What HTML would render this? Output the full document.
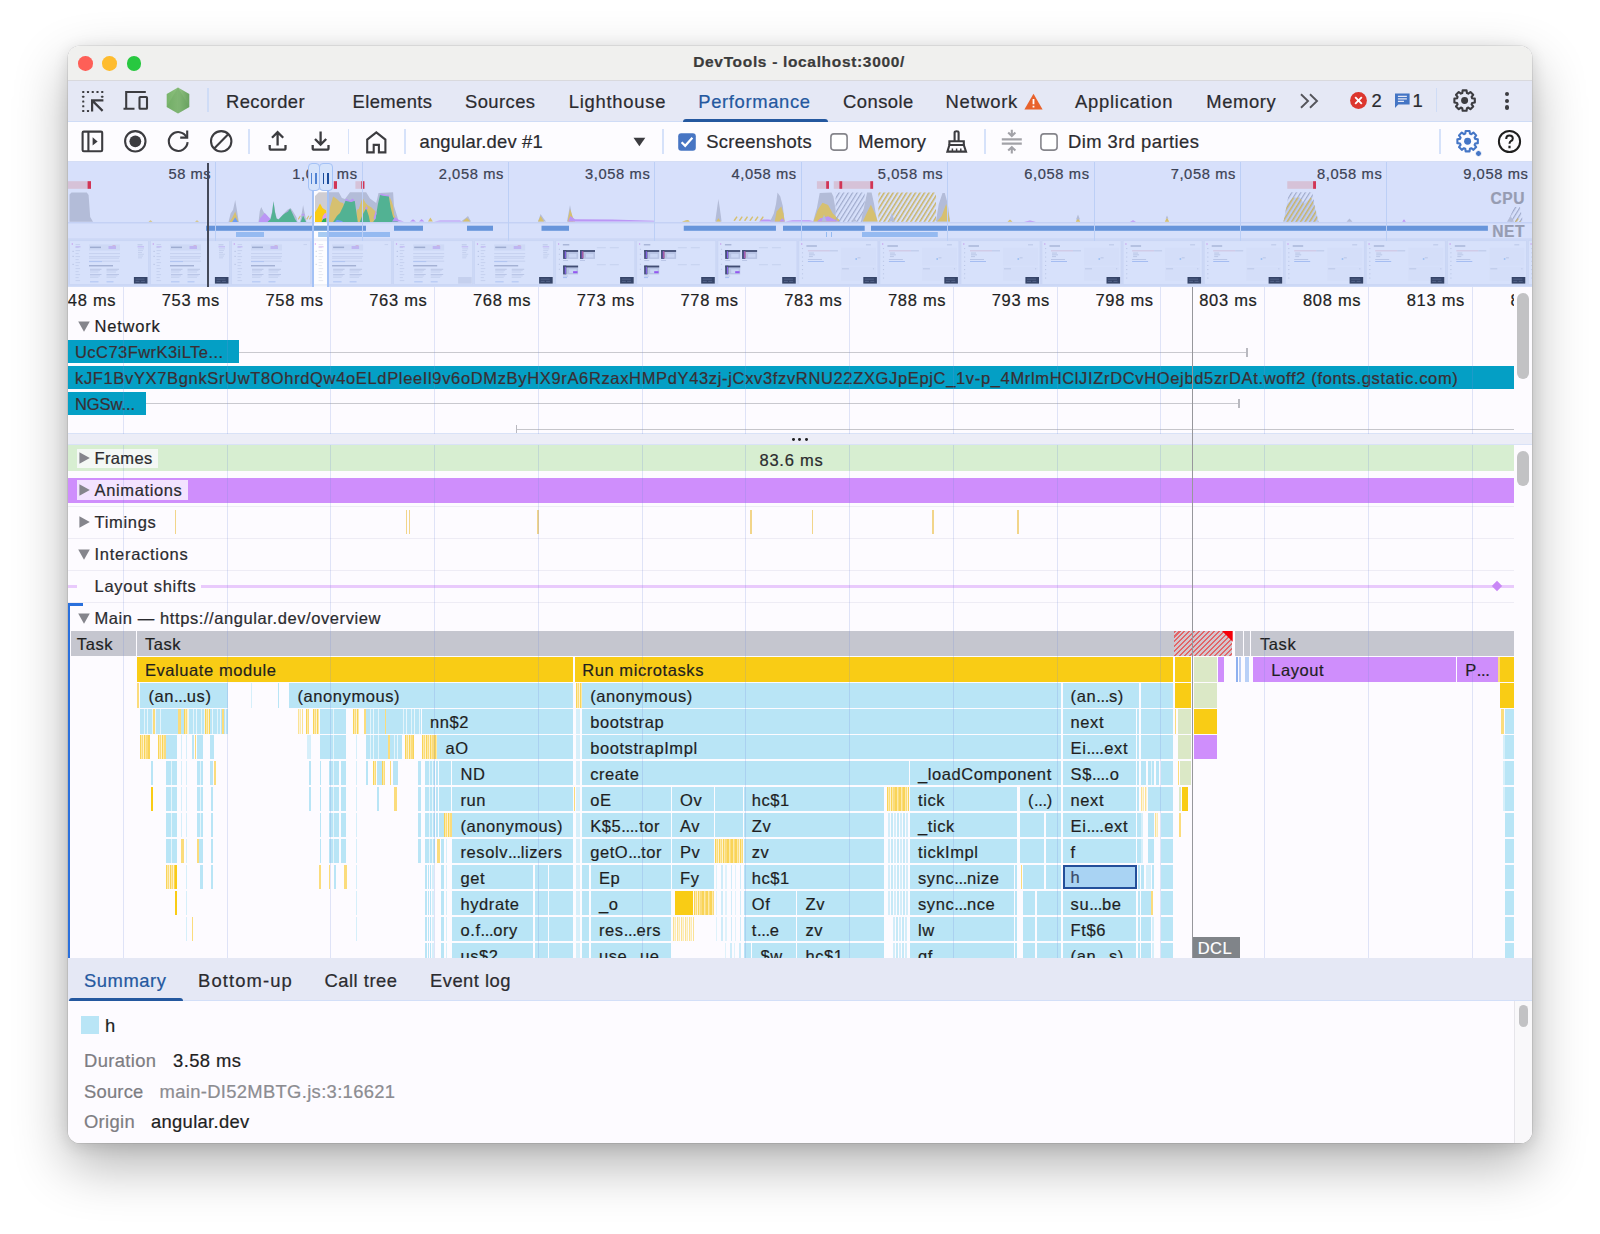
<!DOCTYPE html><html lang="en"><head><meta charset="utf-8"><title>DevTools - localhost:3000/</title><style>
html,body{margin:0;padding:0;background:#fff;}
body{width:1600px;height:1234px;position:relative;overflow:hidden;font-family:"Liberation Sans",sans-serif;}
#win{position:absolute;left:68px;top:46px;width:1464px;height:1097px;border-radius:12px;overflow:hidden;background:#fdfbff;}
#shadow{position:absolute;left:68px;top:46px;width:1464px;height:1097px;border-radius:12px;
 box-shadow:0 0 0 0.6px rgba(0,0,0,.13),0 22px 54px 0 rgba(0,0,0,.30),0 3px 16px 0 rgba(0,0,0,.12);}
#pg{position:absolute;left:-68px;top:-46px;width:1600px;height:1234px;}
#pg div{position:absolute;box-sizing:border-box;}
#pg svg{position:absolute;overflow:visible;}
.t{white-space:nowrap;line-height:30px;height:30px;-webkit-text-stroke:0.22px currentColor;}
.f{-webkit-text-stroke:0.2px currentColor;white-space:nowrap;line-height:26px;font-size:16.6px;color:#1f1f1f;overflow:hidden;padding-left:7.5px;}
</style></head><body>
<div id="shadow"></div><div id="win"><div id="pg">
<div style="left:68.00px;top:46.00px;width:1464.00px;height:34.50px;background:#f0f0ee;border-bottom:1px solid #d9d9dd;"></div>
<div style="left:78.10px;top:56.10px;width:14.60px;height:14.60px;background:#fe5f57;border-radius:50%;"></div>
<div style="left:102.40px;top:56.10px;width:14.60px;height:14.60px;background:#febc2e;border-radius:50%;"></div>
<div style="left:126.70px;top:56.10px;width:14.60px;height:14.60px;background:#28c840;border-radius:50%;"></div>
<div class="t" style="left:693.20px;top:47.40px;font-size:15.5px;color:#3b3b3b;letter-spacing:0.670px;font-weight:bold;">DevTools - localhost:3000/</div>
<div style="left:68.00px;top:80.50px;width:1464.00px;height:41.50px;background:#e5e8f5;border-bottom:1px solid #cfdcf6;"></div>
<div class="t" style="left:226.00px;top:86.90px;font-size:18.4px;color:#2b2b2f;letter-spacing:0.415px;">Recorder</div>
<div class="t" style="left:352.50px;top:86.90px;font-size:18.4px;color:#2b2b2f;letter-spacing:0.412px;">Elements</div>
<div class="t" style="left:465.00px;top:86.90px;font-size:18.4px;color:#2b2b2f;letter-spacing:0.428px;">Sources</div>
<div class="t" style="left:568.75px;top:86.90px;font-size:18.4px;color:#2b2b2f;letter-spacing:0.747px;">Lighthouse</div>
<div class="t" style="left:698.25px;top:86.90px;font-size:18.4px;color:#24589f;letter-spacing:0.651px;">Performance</div>
<div class="t" style="left:843.00px;top:86.90px;font-size:18.4px;color:#2b2b2f;letter-spacing:0.463px;">Console</div>
<div class="t" style="left:945.50px;top:86.90px;font-size:18.4px;color:#2b2b2f;letter-spacing:0.717px;">Network</div>
<div class="t" style="left:1075.00px;top:86.90px;font-size:18.4px;color:#2b2b2f;letter-spacing:0.748px;">Application</div>
<div class="t" style="left:1206.25px;top:86.90px;font-size:18.4px;color:#2b2b2f;letter-spacing:0.591px;">Memory</div>
<div style="left:682.50px;top:118.60px;width:145.50px;height:3.40px;background:#24589f;border-radius:4px 4px 0 0;"></div>
<div style="left:207.30px;top:88.00px;width:1.30px;height:24.00px;background:#cfdcf6;"></div>
<div style="left:1436.00px;top:88.00px;width:1.30px;height:24.00px;background:#cfdcf6;"></div>
<svg style="left:0;top:0" width="1" height="1"><g fill="#3c3c40"><rect x="82.20" y="91" width="2.1" height="2.1" rx=".4"/><rect x="86.95" y="91" width="2.1" height="2.1" rx=".4"/><rect x="82.2" y="95.75" width="2.1" height="2.1" rx=".4"/><rect x="91.70" y="91" width="2.1" height="2.1" rx=".4"/><rect x="82.2" y="100.50" width="2.1" height="2.1" rx=".4"/><rect x="96.45" y="91" width="2.1" height="2.1" rx=".4"/><rect x="82.2" y="105.25" width="2.1" height="2.1" rx=".4"/><rect x="101.20" y="91" width="2.1" height="2.1" rx=".4"/><rect x="82.2" y="110.00" width="2.1" height="2.1" rx=".4"/><rect x="86.95" y="110" width="2.1" height="2.1" rx=".4"/><rect x="101.2" y="95.75" width="2.1" height="2.1" rx=".4"/></g><path d="M103.4 100.4H92.1V111.4M92.6 100.9L102.6 110.9" fill="none" stroke="#3c3c40" stroke-width="2.2"/></svg>
<svg style="left:123px;top:90px" width="26" height="22" viewBox="0 0 26 22" fill="none" stroke="#3c3c40" stroke-width="2.1">
<path d="M3.2 18.8V2H22.8M0.5 18.8H11.5"/><rect x="16.5" y="7" width="7.5" height="11.8" rx="0.8"/></svg>
<svg style="left:166px;top:87px" width="24" height="27" viewBox="0 0 24 27">
<defs><linearGradient id="ng" x1="0" y1="0" x2="1" y2="0"><stop offset="0" stop-color="#78b46b"/><stop offset="0.55" stop-color="#8ec07f"/><stop offset="1" stop-color="#6aa261"/></linearGradient></defs>
<path d="M12 0.5L23.3 7V20L12 26.5L0.7 20V7Z" fill="url(#ng)"/><path d="M12 0.5L23.3 20L12 26.5Z" fill="#63a05c" opacity=".35"/><path d="M0.7 20L12 0.5L12 26.5Z" fill="#5f9a57" opacity=".25"/></svg>
<svg style="left:1023.5px;top:92.5px" width="19" height="17" viewBox="0 0 19 17"><path d="M9.5 0.8L18.6 16.4H0.4Z" fill="#e8622c"/><path d="M9.5 6V11.2M9.5 12.8V14.6" stroke="#fff" stroke-width="1.8"/></svg>
<svg style="left:1300px;top:93px" width="19" height="16" viewBox="0 0 19 16" fill="none" stroke="#55555b" stroke-width="1.9"><path d="M1 1.2L8 8L1 14.8M10 1.2L17 8L10 14.8"/></svg>
<svg style="left:1350.3px;top:92px" width="17" height="17" viewBox="0 0 17 17"><circle cx="8.5" cy="8.5" r="8.4" fill="#dc362e"/><path d="M5.2 5.2L11.8 11.8M11.8 5.2L5.2 11.8" stroke="#fff" stroke-width="1.9"/></svg>
<div class="t" style="left:1371.50px;top:86.30px;font-size:18.4px;color:#2b2b2f;">2</div>
<svg style="left:1394.2px;top:92.6px" width="16.4" height="15.6" viewBox="0 0 16 16"><path d="M0.6 0.4H15.6V11.8H4L0.6 15.4Z" fill="#4475c4"/><path d="M3.6 3.5H12.8M3.6 6.1H12.8M3.6 8.7H9.8" stroke="#e5e8f5" stroke-width="1.3"/></svg>
<div class="t" style="left:1412.50px;top:86.30px;font-size:18.4px;color:#2b2b2f;">1</div>
<svg style="left:0;top:0" width="1" height="1"><path d="M1462.26 93.05L1462.64 90.39L1466.56 90.39L1466.94 93.05L1468.29 93.61L1470.43 91.99L1473.21 94.77L1471.59 96.91L1472.15 98.26L1474.81 98.64L1474.81 102.56L1472.15 102.94L1471.59 104.29L1473.21 106.43L1470.43 109.21L1468.29 107.59L1466.94 108.15L1466.56 110.81L1462.64 110.81L1462.26 108.15L1460.91 107.59L1458.77 109.21L1455.99 106.43L1457.61 104.29L1457.05 102.94L1454.39 102.56L1454.39 98.64L1457.05 98.26L1457.61 96.91L1455.99 94.77L1458.77 91.99L1460.91 93.61Z" fill="none" stroke="#3c3c40" stroke-width="2.1" stroke-linejoin="round"/><circle cx="1464.6" cy="100.6" r="3.48" fill="#3c3c40"/></svg>
<div style="left:1504.60px;top:91.50px;width:4.60px;height:4.60px;background:#3c3c40;border-radius:50%;"></div>
<div style="left:1504.60px;top:98.50px;width:4.60px;height:4.60px;background:#3c3c40;border-radius:50%;"></div>
<div style="left:1504.60px;top:105.40px;width:4.60px;height:4.60px;background:#3c3c40;border-radius:50%;"></div>
<div style="left:68.00px;top:122.00px;width:1464.00px;height:40.00px;background:#fdfcff;border-bottom:1px solid #d5def5;"></div>
<div style="left:248.20px;top:129.00px;width:1.70px;height:24.50px;background:#d6e2fa;"></div>
<div style="left:347.70px;top:129.00px;width:1.70px;height:24.50px;background:#d6e2fa;"></div>
<div style="left:404.00px;top:129.00px;width:1.70px;height:24.50px;background:#d6e2fa;"></div>
<div style="left:662.00px;top:129.00px;width:1.70px;height:24.50px;background:#d6e2fa;"></div>
<div style="left:984.00px;top:129.00px;width:1.70px;height:24.50px;background:#d6e2fa;"></div>
<div style="left:1439.20px;top:129.00px;width:1.70px;height:24.50px;background:#d6e2fa;"></div>
<svg style="left:81px;top:130px" width="23" height="23" viewBox="0 0 23 23" fill="none" stroke="#3c3c40" stroke-width="2.1"><rect x="1.6" y="1.6" width="19.6" height="19.6" rx="1.2"/><path d="M7.4 1.6V21.2"/><path d="M11.6 7.2L16.6 11.4L11.6 15.6Z" fill="#3c3c40" stroke="none"/></svg>
<svg style="left:123px;top:129px" width="25" height="25" viewBox="0 0 25 25" fill="none" stroke="#3c3c40" stroke-width="2.1"><circle cx="12.3" cy="12.3" r="10.2"/><circle cx="12.3" cy="12.3" r="5.9" fill="#3c3c40" stroke="none"/></svg>
<svg style="left:166px;top:129px" width="25" height="25" viewBox="0 0 25 25" fill="none" stroke="#3c3c40" stroke-width="2.1"><path d="M20.6 8.2A9.4 9.4 0 1 0 21.6 13.2"/><path d="M21.2 1.6V8.6H14.2"/></svg>
<svg style="left:208.5px;top:129px" width="25" height="25" viewBox="0 0 25 25" fill="none" stroke="#3c3c40" stroke-width="2.1"><circle cx="12.2" cy="12.3" r="10.2"/><path d="M5.2 19.4L19.2 5.2"/></svg>
<svg style="left:267px;top:129px" width="22" height="25" viewBox="0 0 22 25" fill="none" stroke="#3c3c40" stroke-width="2.1"><path d="M10.6 16.6V3.2M5 8.8L10.6 3.2L16.2 8.8M2.7 16V19.2Q2.7 20.7 4.2 20.7H17Q18.5 20.7 18.5 19.2V16" stroke-width="2.3"/></svg>
<svg style="left:309.5px;top:129px" width="22" height="25" viewBox="0 0 22 25" fill="none" stroke="#3c3c40" stroke-width="2.1"><path d="M10.6 2.6V15.6M5 10L10.6 15.6L16.2 10M2.7 16V19.2Q2.7 20.7 4.2 20.7H17Q18.5 20.7 18.5 19.2V16" stroke-width="2.3"/></svg>
<svg style="left:365px;top:129.5px" width="23" height="25" viewBox="0 0 23 25" fill="none" stroke="#3c3c40" stroke-width="2.1" stroke-width="2.6"><path d="M2.2 22.4V9.6L11.3 2.4L20.4 9.6V22.4H13.9V14.9H8.7V22.4Z"/></svg>
<div class="t" style="left:419.50px;top:127.30px;font-size:18.4px;color:#2b2b2f;letter-spacing:0.198px;">angular.dev #1</div>
<svg style="left:632.5px;top:137px" width="13" height="10" viewBox="0 0 13 10"><path d="M0.5 0.8H12.3L6.4 9.2Z" fill="#3c3c40"/></svg>
<svg style="left:678px;top:132.6px" width="18" height="18" viewBox="0 0 18 18"><rect x="0.2" y="0.2" width="17.6" height="17.6" rx="3" fill="#4775c3"/><path d="M3.6 9.2L7.2 12.8L14.4 4.8" fill="none" stroke="#fff" stroke-width="2.2"/></svg>
<div class="t" style="left:706.25px;top:127.30px;font-size:18.4px;color:#2b2b2f;letter-spacing:0.315px;">Screenshots</div>
<svg style="left:829.8px;top:132.6px" width="18" height="18" viewBox="0 0 18 18"><rect x="0.9" y="0.9" width="16.2" height="16.2" rx="3" fill="#fff" stroke="#85858b" stroke-width="1.6"/></svg>
<div class="t" style="left:858.25px;top:127.30px;font-size:18.4px;color:#2b2b2f;letter-spacing:0.258px;">Memory</div>
<svg style="left:945.5px;top:130px" width="22" height="23" viewBox="0 0 22 23" fill="none" stroke="#3c3c40" stroke-width="2.1"><path d="M8.6 11V2.6Q8.6 1.2 10.6 1.2Q12.6 1.2 12.6 2.6V11"/><path d="M3.4 15V11.2H17.8V15"/><path d="M3.4 15L1.4 21.6H20L17.8 15Z"/><path d="M6.4 21.4V18.4M10.6 21.4V18.4M14.8 21.4V18.4" stroke-width="1.5"/></svg>
<svg style="left:1000.5px;top:127.5px" width="22" height="28" viewBox="0 0 22 28" fill="none" stroke="#a2a2a8" stroke-width="2.1"><path d="M0.8 11.4H20.8M0.8 15.6H20.8"/><path d="M10.8 1.8V7.4M7.2 4.6L10.8 8L14.4 4.6M10.8 25.4V19.8M7.2 22.6L10.8 19.2L14.4 22.6"/></svg>
<svg style="left:1040.3px;top:132.6px" width="18" height="18" viewBox="0 0 18 18"><rect x="0.9" y="0.9" width="16.2" height="16.2" rx="3" fill="#fff" stroke="#85858b" stroke-width="1.6"/></svg>
<div class="t" style="left:1068.00px;top:127.30px;font-size:18.4px;color:#2b2b2f;letter-spacing:0.450px;">Dim 3rd parties</div>
<svg style="left:0;top:0" width="1" height="1"><path d="M1465.26 133.65L1465.64 130.99L1469.56 130.99L1469.94 133.65L1471.29 134.21L1473.43 132.59L1476.21 135.37L1474.59 137.51L1475.15 138.86L1477.81 139.24L1477.81 143.16L1475.15 143.54L1474.59 144.89L1476.21 147.03L1473.43 149.81L1471.29 148.19L1469.94 148.75L1469.56 151.41L1465.64 151.41L1465.26 148.75L1463.91 148.19L1461.77 149.81L1458.99 147.03L1460.61 144.89L1460.05 143.54L1457.39 143.16L1457.39 139.24L1460.05 138.86L1460.61 137.51L1458.99 135.37L1461.77 132.59L1463.91 134.21Z" fill="none" stroke="#4576c6" stroke-width="2.1" stroke-linejoin="round"/><circle cx="1467.6" cy="141.2" r="3.48" fill="#4576c6"/></svg>
<div style="left:1475.20px;top:150.00px;width:6.80px;height:6.80px;background:#4576c6;border-radius:50%;border:1.2px solid #fdfcff;"></div>
<svg style="left:1496.5px;top:129px" width="25" height="25" viewBox="0 0 25 25" fill="none" stroke="#1f1f1f" stroke-width="2"><circle cx="12.5" cy="12.5" r="10.6"/><path d="M9.2 10Q9.2 6.6 12.5 6.6Q15.8 6.6 15.8 9.4Q15.8 11.2 13.8 12.2Q12.5 13 12.5 14.8"/><path d="M12.5 16.8V19.2" stroke-width="2.2"/></svg>
<div style="left:68.00px;top:162.00px;width:1464.00px;height:125.00px;background:#fdfcff;"></div>
<svg style="left:0;top:0" width="1600" height="1234" viewBox="0 0 1600 1234"><defs>
<pattern id="hy" width="3.8" height="3.8" patternUnits="userSpaceOnUse" patternTransform="rotate(-58)"><rect width="3.8" height="1.5" fill="#ecc23e"/></pattern>
<pattern id="hg" width="3.8" height="3.8" patternUnits="userSpaceOnUse" patternTransform="rotate(-58)"><rect width="3.8" height="1.2" fill="#b4b5c2"/></pattern>
<pattern id="hr" width="4.4" height="4.4" patternUnits="userSpaceOnUse" patternTransform="rotate(-45)"><rect width="4.4" height="1.7" fill="#e36a6a"/></pattern>
</defs><polygon points="69.5,221.8 69.5,194.5 71.5,192.4 86.8,192.4 88.6,195.0 90.2,217.0 93.0,221.8" fill="#cfcdd2" /><polygon points="148.5,221.8 150.5,220.3 152.5,221.8" fill="#fbd24c" /><polygon points="195.0,221.8 197.0,220.3 199.0,221.8" fill="#fbd24c" /><polygon points="228.5,222.0 230.6,213.5 233.1,209.8 235.2,200.1 236.9,209.8 238.8,222.0" fill="#cfcdd2" /><polygon points="229.4,222.0 232.5,217.2 235.2,211.6 237.2,217.9 238.5,222.0" fill="#fbd24c" /><polygon points="232.2,222.0 235.2,217.2 238.1,222.0" fill="#7aa7f5" /><polygon points="258.5,222.0 259.8,211.0 261.2,207.0 263.8,212.2 267.5,216.0 270.6,222.0" fill="#cfcdd2" /><polygon points="258.8,222.0 260.2,217.9 264.8,213.0 268.1,216.6 271.2,219.8 271.9,222.0" fill="#d99cf8" /><polygon points="269.4,222.0 271.9,212.2 273.5,200.8 275.2,212.2 276.9,218.5 278.8,219.1 283.8,213.5 287.5,209.8 290.6,207.9 293.1,211.6 296.5,217.2 297.5,222.0" fill="#cfcdd2" /><polygon points="267.5,222.0 270.6,219.1 272.2,212.2 273.5,201.6 275.0,212.2 276.5,218.5 278.5,219.5 283.1,214.8 287.5,211.6 290.2,208.8 292.5,213.5 295.0,219.1 296.9,222.0" fill="#52c07a" /><polygon points="285.0,213.2 287.5,211.2 289.0,210.0 288.1,211.6" fill="#d99cf8" /><polygon points="300.0,222.0 301.9,212.2 303.1,205.1 304.5,212.2 306.5,222.0" fill="#cfcdd2" /><polygon points="300.6,222.0 303.1,215.5 306.0,222.0" fill="#52c07a" /><polygon points="301.2,215.0 303.1,213.5 305.0,215.0 303.1,215.8" fill="#d99cf8" /><polygon points="297.8,219.1 300.0,215.4 300.8,216.0 298.8,219.8" fill="#fbd24c" /><polygon points="306.2,219.1 308.5,215.4 309.2,216.0 307.2,219.8" fill="#fbd24c" /><polygon points="309.0,219.1 311.2,215.4 312.0,216.0 310.0,219.8" fill="#fbd24c" /><polygon points="315.0,222.0 315.0,196.0 318.8,192.2 338.8,192.2 341.9,197.9 345.0,199.1 350.0,192.2 366.2,192.2 370.0,198.5 376.2,202.9 378.5,192.9 393.1,192.2 394.0,206.0 397.5,217.2 398.5,222.0" fill="#cfcdd2" /><polygon points="329.0,222.0 330.0,207.2 333.1,196.6 336.9,199.1 340.2,202.2 343.1,202.9 345.0,207.2 340.0,213.5 336.2,222.0" fill="#fbd24c" /><polygon points="355.6,222.0 356.9,209.8 358.8,209.1 362.5,197.5 365.6,202.9 368.1,205.4 371.2,207.2 375.6,211.6 374.4,222.0" fill="#fbd24c" /><polygon points="389.4,196.6 391.5,201.0 393.1,206.0 394.0,214.8 395.6,217.9 395.0,222.0 388.8,222.0" fill="#fbd24c" /><polygon points="333.1,222.0 336.9,216.0 340.0,212.9 343.1,206.6 345.6,200.4 351.2,201.6 354.8,201.0 356.2,211.0 357.8,222.0" fill="#52c07a" /><polygon points="345.0,200.8 346.0,198.8 350.0,200.4 352.5,198.5 354.8,200.5 351.2,202.0" fill="#d99cf8" /><polygon points="335.0,222.0 336.9,219.8 341.9,221.0 343.1,222.0" fill="#7aa7f5" /><polygon points="359.8,222.0 362.5,214.8 366.2,208.2 368.8,216.0 370.0,222.0" fill="#52c07a" /><polygon points="365.0,208.8 366.5,206.0 367.8,208.8 366.5,209.5" fill="#d99cf8" /><polygon points="373.1,222.0 375.6,218.5 377.8,204.8 380.0,194.8 385.0,195.8 388.8,196.0 390.6,207.2 393.1,217.2 396.2,219.8 398.1,222.0" fill="#52c07a" /><polygon points="379.8,195.0 381.2,193.5 386.2,195.0 389.0,194.8 389.0,196.5 385.0,196.0" fill="#d99cf8" /><polygon points="373.5,218.5 375.6,211.0 376.5,213.5 375.0,219.8" fill="#d99cf8" /><polygon points="315.0,222.0 315.0,212.2 317.5,208.5 320.0,203.5 322.5,207.9 326.2,210.4 326.2,222.0" fill="#f9cc15" /><polygon points="321.9,222.0 322.8,216.0 325.0,212.9 326.2,213.5 326.2,222.0" fill="#d99cf8" /><polygon points="321.5,222.0 323.1,219.1 326.2,217.9 326.2,222.0" fill="#2fb255" /><polygon points="392.0,221.6 395.0,217.0 399.0,220.0 404.0,221.6" fill="#d99cf8" /><polygon points="410.0,221.6 413.0,219.2 416.0,221.6" fill="#d99cf8" /><polygon points="419.0,221.6 421.6,219.0 424.4,221.6" fill="#d99cf8" /><polygon points="428.0,221.6 430.4,217.6 432.8,221.6" fill="#fbd24c" /><polygon points="434.0,221.6 440.0,220.6 460.0,220.6 462.0,221.6" fill="#d99cf8" /><polygon points="461.0,221.6 465.0,218.4 468.0,216.0 471.0,221.6" fill="#cfcdd2" /><polygon points="462.4,221.6 467.0,218.0 470.4,221.6" fill="#fbd24c" /><polygon points="538.0,221.6 540.6,214.0 543.6,218.4 546.0,221.6" fill="#cfcdd2" /><polygon points="538.0,221.6 540.6,216.0 544.0,221.6" fill="#fbd24c" /><polygon points="567.0,221.6 570.0,205.0 573.0,221.6" fill="#cfcdd2" /><polygon points="567.6,221.6 570.0,209.0 572.8,217.0 575.0,221.6" fill="#fbd24c" /><polygon points="568.0,221.6 570.4,216.0 575.0,219.2 612.0,219.6 654.0,220.8 654.0,221.6" fill="#d99cf8" /><polygon points="682.0,221.6 688.0,220.0 690.0,221.6" fill="#fbd24c" /><polygon points="681.9,221.6 687.5,220.2 689.4,221.6" fill="#fbd24c" /><polygon points="715.2,221.6 717.1,207.9 718.4,199.1 719.8,207.9 721.6,221.6" fill="#cfcdd2" /><polygon points="716.0,221.6 718.4,218.2 720.9,221.6" fill="#fbd24c" /><polygon points="733.4,220.6 736.4,216.3 737.6,216.9 734.9,221.0" fill="#fbd24c" /><polygon points="738.7,220.6 741.7,216.3 742.8,216.9 740.2,221.0" fill="#fbd24c" /><polygon points="743.9,220.6 746.9,216.3 748.1,216.9 745.4,221.0" fill="#fbd24c" /><polygon points="749.2,220.6 752.2,216.3 753.3,216.9 750.7,221.0" fill="#fbd24c" /><polygon points="754.4,220.6 757.4,216.3 758.6,216.9 755.9,221.0" fill="#fbd24c" /><polygon points="759.7,220.6 762.7,216.3 763.8,216.9 761.2,221.0" fill="#fbd24c" /><polygon points="758.8,221.6 762.5,219.5 768.1,219.5 785.0,221.6" fill="#d99cf8" /><polygon points="770.0,221.6 773.8,213.5 776.0,204.1 777.5,192.5 780.3,196.6 782.8,206.0 784.6,221.6" fill="#cfcdd2" /><polygon points="774.7,221.6 776.6,211.6 781.2,206.6 783.5,213.5 784.6,221.6" fill="#fbd24c" /><polygon points="779.4,221.6 782.2,218.2 785.0,221.6" fill="#d99cf8" /><polygon points="785.0,221.6 792.5,220.2 809.4,220.2 815.0,221.6" fill="#d99cf8" /><polygon points="813.1,221.6 816.9,207.9 819.7,192.9 831.5,192.5 833.4,196.6 835.6,209.8 835.6,221.6" fill="#cfcdd2" /><polygon points="813.5,221.6 817.8,209.8 822.5,202.8 828.1,205.1 832.8,213.5 839.4,220.1 839.4,221.6" fill="#fbd24c" /><polygon points="816.9,221.6 820.6,218.2 828.1,216.3 835.6,220.1 839.4,221.6" fill="#d99cf8" /><polygon points="821.6,221.6 824.0,214.4 826.6,221.6" fill="#cfcdd2" /><rect x="835.6" y="192.5" width="29.1" height="29.3" fill="url(#hg)"/><polygon points="850.6,221.6 854.0,218.2 857.2,221.6" fill="#cfcdd2" /><polygon points="860.9,221.6 864.7,204.1 867.1,192.5 871.6,192.5 874.1,204.1 877.2,221.6" fill="#cfcdd2" /><polygon points="862.8,221.6 867.5,211.6 870.9,204.7 875.0,213.5 877.8,221.6" fill="#fbd24c" /><rect x="878.4" y="192.5" width="57.6" height="29.3" fill="url(#hy)"/><polygon points="889.1,221.6 891.9,213.1 894.7,221.6" fill="#cfcdd2" /><polygon points="935.9,221.6 938.8,204.1 942.5,192.9 944.8,192.9 947.8,204.1 950.0,221.6" fill="#cfcdd2" /><polygon points="936.9,221.6 941.6,216.3 946.2,204.1 948.5,213.5 950.0,221.6" fill="#fbd24c" /><polygon points="1007.5,221.8 1010.0,219.6 1012.5,221.8" fill="#fbd24c" /><polygon points="1075.8,221.8 1078.0,217.6 1080.2,221.8" fill="#fbd24c" /><polygon points="1130.0,221.8 1133.0,220.2 1136.0,221.8" fill="#d99cf8" /><polygon points="1164.8,221.8 1167.0,217.2 1169.2,221.8" fill="#fbd24c" /><polygon points="1402.2,221.8 1404.0,219.2 1405.8,221.8" fill="#d99cf8" /><polygon points="1024.0,221.8 1030.0,220.6 1036.0,221.8" fill="#d99cf8" /><polygon points="1076.0,219.5 1078.0,214.6 1080.0,219.5" fill="#cfcdd2" /><polygon points="1165.6,218.6 1167.0,215.4 1168.4,218.6" fill="#cfcdd2" /><polygon points="1346.5,221.8 1349.5,218.4 1352.5,221.8" fill="#cfcdd2" /><polygon points="1283.5,221.8 1289.1,192.3 1312.2,192.3 1318.4,221.8" fill="url(#hg)" /><polygon points="1283.5,221.8 1287.0,204.0 1293.0,197.5 1300.0,197.5 1304.0,204.0 1311.0,197.0 1314.0,204.0 1318.4,221.8" fill="#d8dff7" /><polygon points="1283.5,221.8 1287.0,204.0 1293.0,197.5 1300.0,197.5 1304.0,204.0 1311.0,197.0 1314.0,204.0 1318.4,221.8" fill="url(#hy)" /><polygon points="1508.0,221.8 1514.0,207.0 1520.0,207.0 1523.0,221.8" fill="url(#hg)" /><polygon points="1514.0,221.8 1518.0,218.0 1521.0,221.8" fill="url(#hy)" /><polygon points="1507.0,221.8 1510.5,216.0 1514.0,221.8" fill="#cfcdd2" /><rect x="68" y="181.2" width="23.0" height="7.6" fill="#fbd5d2"/><rect x="329" y="181.2" width="8.0" height="7.6" fill="#fbd5d2"/><rect x="355.4" y="181.2" width="9.0" height="7.6" fill="#fbd5d2"/><rect x="816.9" y="181.2" width="12.1" height="7.6" fill="#fbd5d2"/><rect x="833.75" y="181.2" width="39.4" height="7.6" fill="#fbd5d2"/><rect x="1287.25" y="181.2" width="28.8" height="7.6" fill="#fbd5d2"/><rect x="87.6" y="181.2" width="3.4" height="7.6" fill="#f5202a"/><rect x="334" y="181.2" width="3.0" height="7.6" fill="#f5202a"/><rect x="361.3" y="181.2" width="3.1" height="7.6" fill="#f5202a"/><rect x="826.2" y="181.2" width="2.8" height="7.6" fill="#f5202a"/><rect x="839.4" y="181.2" width="2.8" height="7.6" fill="#f5202a"/><rect x="870.3" y="181.2" width="2.8" height="7.6" fill="#f5202a"/><rect x="1313.1" y="181.2" width="2.9" height="7.6" fill="#f5202a"/><rect x="68" y="222.3" width="1464" height="1" fill="#c9d3ee" opacity=".7"/><rect x="206" y="225.7" width="160.0" height="5.1" fill="#6d9bd6"/><rect x="394" y="225.7" width="29.0" height="5.1" fill="#6d9bd6"/><rect x="467" y="225.7" width="26.0" height="5.1" fill="#6d9bd6"/><rect x="541.5" y="225.7" width="27.5" height="5.1" fill="#6d9bd6"/><rect x="683.75" y="225.7" width="92.2" height="5.1" fill="#6d9bd6"/><rect x="783" y="225.7" width="81.7" height="5.1" fill="#6d9bd6"/><rect x="871" y="225.7" width="616.9" height="5.1" fill="#6d9bd6"/><rect x="236" y="232" width="28.0" height="5" fill="#a8cbf2"/><rect x="318.1" y="232" width="71.9" height="5" fill="#a8cbf2"/><rect x="862" y="232" width="75.8" height="5" fill="#a8cbf2"/><rect x="826" y="232" width="1" height="5" fill="#a8cbf2"/><rect x="831" y="232" width="1" height="5" fill="#a8cbf2"/></svg>
<svg style="left:0;top:0" width="1600" height="1234" viewBox="0 0 1600 1234"><rect x="68" y="238.2" width="1464" height="48.3" fill="#eff1f9"/><rect x="69.5" y="240.8" width="79.0" height="43.8" fill="#fdfdff" stroke="#e6e9f4" stroke-width="0.6"/><rect x="71.7" y="243.4" width="1.2" height="1.2" fill="#e59ae8"/><rect x="75.5" y="244.2" width="4.6" height="0.9" fill="#e3e5ee"/><rect x="75.5" y="247.2" width="3.2" height="0.9" fill="#e3e5ee"/><rect x="75.5" y="250.2" width="4.6" height="0.9" fill="#e3e5ee"/><rect x="75.5" y="253.2" width="3.2" height="0.9" fill="#e3e5ee"/><rect x="75.5" y="256.2" width="4.6" height="0.9" fill="#e3e5ee"/><rect x="75.5" y="259.2" width="3.2" height="0.9" fill="#e3e5ee"/><rect x="75.5" y="262.2" width="4.6" height="0.9" fill="#e3e5ee"/><rect x="75.5" y="265.2" width="3.2" height="0.9" fill="#e3e5ee"/><rect x="75.5" y="268.2" width="4.6" height="0.9" fill="#e3e5ee"/><rect x="75.5" y="271.2" width="3.2" height="0.9" fill="#e3e5ee"/><rect x="75.5" y="274.2" width="4.6" height="0.9" fill="#e3e5ee"/><rect x="75.5" y="277.2" width="3.2" height="0.9" fill="#e3e5ee"/><rect x="75.5" y="280.2" width="4.6" height="0.9" fill="#e3e5ee"/><rect x="75.5" y="246.4" width="5" height="0.9" fill="#d9b8f2"/><rect x="72.5" y="250.8" width="1.2" height="1.2" fill="#d3d6e2"/><rect x="72.5" y="255.8" width="1.2" height="1.2" fill="#d3d6e2"/><rect x="72.5" y="263.8" width="1.2" height="1.2" fill="#d3d6e2"/><rect x="89.0" y="244.4" width="31" height="6.2" fill="#f1f2f8"/><rect x="90.0" y="246.6" width="11" height="1.5" fill="#b4b8c8"/><rect x="108.5" y="246.0" width="7.5" height="3" fill="#dcc4f4"/><rect x="112.5" y="245.0" width="3" height="1.2" fill="#f0c6d8"/><rect x="89.0" y="253.2" width="31" height="0.9" fill="#e3e5ee"/><rect x="89.0" y="256.2" width="31" height="0.9" fill="#e3e5ee"/><rect x="89.0" y="257.7" width="30" height="0.9" fill="#e3e5ee"/><rect x="89.0" y="260.7" width="31" height="0.9" fill="#e3e5ee"/><rect x="89.0" y="261.2" width="13" height="0.9" fill="#c5d4f2"/><rect x="89.0" y="265.1" width="24" height="1.3" fill="#b4b8c8"/><rect x="90.0" y="268.8" width="11.5" height="0.9" fill="#d3d6e2"/><rect x="106.5" y="268.8" width="12.5" height="0.9" fill="#d3d6e2"/><rect x="90.0" y="270.2" width="10.0" height="0.9" fill="#e3e5ee"/><rect x="106.5" y="270.2" width="11.0" height="0.9" fill="#e3e5ee"/><rect x="90.0" y="271.6" width="8.5" height="0.9" fill="#e3e5ee"/><rect x="106.5" y="271.6" width="9.5" height="0.9" fill="#e3e5ee"/><rect x="90.0" y="274.0" width="11.5" height="0.9" fill="#d3d6e2"/><rect x="106.5" y="274.0" width="12.5" height="0.9" fill="#d3d6e2"/><rect x="90.0" y="275.4" width="10.0" height="0.9" fill="#e3e5ee"/><rect x="106.5" y="275.4" width="11.0" height="0.9" fill="#e3e5ee"/><rect x="90.0" y="276.8" width="8.5" height="0.9" fill="#e3e5ee"/><rect x="106.5" y="276.8" width="9.5" height="0.9" fill="#e3e5ee"/><rect x="90.0" y="281.4" width="8.5" height="0.9" fill="#c3d3f3"/><rect x="106.5" y="281.4" width="7" height="0.9" fill="#c3d3f3"/><rect x="137.5" y="244.4" width="5" height="0.9" fill="#d3d6e2"/><rect x="137.5" y="246.4" width="6.5" height="0.9" fill="#d9b8f2"/><rect x="138.0" y="248.4" width="6" height="0.9" fill="#e3e5ee"/><rect x="138.0" y="250.2" width="5" height="0.9" fill="#e3e5ee"/><rect x="138.0" y="252.0" width="4" height="0.9" fill="#e3e5ee"/><rect x="138.0" y="253.8" width="6" height="0.9" fill="#e3e5ee"/><rect x="138.0" y="255.6" width="5" height="0.9" fill="#e3e5ee"/><rect x="138.0" y="257.4" width="4" height="0.9" fill="#e3e5ee"/><rect x="133.9" y="277.0" width="13.6" height="6.6" fill="#2d3342"/><rect x="135.5" y="278.7" width="9" height="0.8" fill="#5d6577"/><rect x="135.5" y="280.9" width="4" height="0.8" fill="#5d6577"/><rect x="140.9" y="280.9" width="4" height="0.8" fill="#5d6577"/><rect x="150.5" y="240.8" width="79.0" height="43.8" fill="#fdfdff" stroke="#e6e9f4" stroke-width="0.6"/><rect x="152.7" y="243.4" width="1.2" height="1.2" fill="#e59ae8"/><rect x="156.5" y="244.2" width="4.6" height="0.9" fill="#e3e5ee"/><rect x="156.5" y="247.2" width="3.2" height="0.9" fill="#e3e5ee"/><rect x="156.5" y="250.2" width="4.6" height="0.9" fill="#e3e5ee"/><rect x="156.5" y="253.2" width="3.2" height="0.9" fill="#e3e5ee"/><rect x="156.5" y="256.2" width="4.6" height="0.9" fill="#e3e5ee"/><rect x="156.5" y="259.2" width="3.2" height="0.9" fill="#e3e5ee"/><rect x="156.5" y="262.2" width="4.6" height="0.9" fill="#e3e5ee"/><rect x="156.5" y="265.2" width="3.2" height="0.9" fill="#e3e5ee"/><rect x="156.5" y="268.2" width="4.6" height="0.9" fill="#e3e5ee"/><rect x="156.5" y="271.2" width="3.2" height="0.9" fill="#e3e5ee"/><rect x="156.5" y="274.2" width="4.6" height="0.9" fill="#e3e5ee"/><rect x="156.5" y="277.2" width="3.2" height="0.9" fill="#e3e5ee"/><rect x="156.5" y="280.2" width="4.6" height="0.9" fill="#e3e5ee"/><rect x="156.5" y="246.4" width="5" height="0.9" fill="#d9b8f2"/><rect x="153.5" y="250.8" width="1.2" height="1.2" fill="#d3d6e2"/><rect x="153.5" y="255.8" width="1.2" height="1.2" fill="#d3d6e2"/><rect x="153.5" y="263.8" width="1.2" height="1.2" fill="#d3d6e2"/><rect x="170.0" y="244.4" width="31" height="6.2" fill="#f1f2f8"/><rect x="171.0" y="246.6" width="11" height="1.5" fill="#b4b8c8"/><rect x="189.5" y="246.0" width="7.5" height="3" fill="#dcc4f4"/><rect x="193.5" y="245.0" width="3" height="1.2" fill="#f0c6d8"/><rect x="170.0" y="253.2" width="31" height="0.9" fill="#e3e5ee"/><rect x="170.0" y="256.2" width="31" height="0.9" fill="#e3e5ee"/><rect x="170.0" y="257.7" width="30" height="0.9" fill="#e3e5ee"/><rect x="170.0" y="260.7" width="31" height="0.9" fill="#e3e5ee"/><rect x="170.0" y="261.2" width="13" height="0.9" fill="#c5d4f2"/><rect x="170.0" y="265.1" width="24" height="1.3" fill="#b4b8c8"/><rect x="171.0" y="268.8" width="11.5" height="0.9" fill="#d3d6e2"/><rect x="187.5" y="268.8" width="12.5" height="0.9" fill="#d3d6e2"/><rect x="171.0" y="270.2" width="10.0" height="0.9" fill="#e3e5ee"/><rect x="187.5" y="270.2" width="11.0" height="0.9" fill="#e3e5ee"/><rect x="171.0" y="271.6" width="8.5" height="0.9" fill="#e3e5ee"/><rect x="187.5" y="271.6" width="9.5" height="0.9" fill="#e3e5ee"/><rect x="171.0" y="274.0" width="11.5" height="0.9" fill="#d3d6e2"/><rect x="187.5" y="274.0" width="12.5" height="0.9" fill="#d3d6e2"/><rect x="171.0" y="275.4" width="10.0" height="0.9" fill="#e3e5ee"/><rect x="187.5" y="275.4" width="11.0" height="0.9" fill="#e3e5ee"/><rect x="171.0" y="276.8" width="8.5" height="0.9" fill="#e3e5ee"/><rect x="187.5" y="276.8" width="9.5" height="0.9" fill="#e3e5ee"/><rect x="171.0" y="281.4" width="8.5" height="0.9" fill="#c3d3f3"/><rect x="187.5" y="281.4" width="7" height="0.9" fill="#c3d3f3"/><rect x="218.5" y="244.4" width="5" height="0.9" fill="#d3d6e2"/><rect x="218.5" y="246.4" width="6.5" height="0.9" fill="#d9b8f2"/><rect x="219.0" y="248.4" width="6" height="0.9" fill="#e3e5ee"/><rect x="219.0" y="250.2" width="5" height="0.9" fill="#e3e5ee"/><rect x="219.0" y="252.0" width="4" height="0.9" fill="#e3e5ee"/><rect x="219.0" y="253.8" width="6" height="0.9" fill="#e3e5ee"/><rect x="219.0" y="255.6" width="5" height="0.9" fill="#e3e5ee"/><rect x="219.0" y="257.4" width="4" height="0.9" fill="#e3e5ee"/><rect x="214.9" y="277.0" width="13.6" height="6.6" fill="#2d3342"/><rect x="216.5" y="278.7" width="9" height="0.8" fill="#5d6577"/><rect x="216.5" y="280.9" width="4" height="0.8" fill="#5d6577"/><rect x="221.9" y="280.9" width="4" height="0.8" fill="#5d6577"/><rect x="231.5" y="240.8" width="79.0" height="43.8" fill="#fdfdff" stroke="#e6e9f4" stroke-width="0.6"/><rect x="233.7" y="243.4" width="1.2" height="1.2" fill="#e59ae8"/><rect x="237.5" y="244.2" width="4.6" height="0.9" fill="#e3e5ee"/><rect x="237.5" y="247.2" width="3.2" height="0.9" fill="#e3e5ee"/><rect x="237.5" y="250.2" width="4.6" height="0.9" fill="#e3e5ee"/><rect x="237.5" y="253.2" width="3.2" height="0.9" fill="#e3e5ee"/><rect x="237.5" y="256.2" width="4.6" height="0.9" fill="#e3e5ee"/><rect x="237.5" y="259.2" width="3.2" height="0.9" fill="#e3e5ee"/><rect x="237.5" y="262.2" width="4.6" height="0.9" fill="#e3e5ee"/><rect x="237.5" y="265.2" width="3.2" height="0.9" fill="#e3e5ee"/><rect x="237.5" y="268.2" width="4.6" height="0.9" fill="#e3e5ee"/><rect x="237.5" y="271.2" width="3.2" height="0.9" fill="#e3e5ee"/><rect x="237.5" y="274.2" width="4.6" height="0.9" fill="#e3e5ee"/><rect x="237.5" y="277.2" width="3.2" height="0.9" fill="#e3e5ee"/><rect x="237.5" y="280.2" width="4.6" height="0.9" fill="#e3e5ee"/><rect x="237.5" y="246.4" width="5" height="0.9" fill="#d9b8f2"/><rect x="234.5" y="250.8" width="1.2" height="1.2" fill="#d3d6e2"/><rect x="234.5" y="255.8" width="1.2" height="1.2" fill="#d3d6e2"/><rect x="234.5" y="263.8" width="1.2" height="1.2" fill="#d3d6e2"/><rect x="251.0" y="244.4" width="31" height="6.2" fill="#f1f2f8"/><rect x="252.0" y="246.6" width="11" height="1.5" fill="#b4b8c8"/><rect x="270.5" y="246.0" width="7.5" height="3" fill="#dcc4f4"/><rect x="274.5" y="245.0" width="3" height="1.2" fill="#f0c6d8"/><rect x="251.0" y="253.2" width="31" height="0.9" fill="#e3e5ee"/><rect x="251.0" y="256.2" width="31" height="0.9" fill="#e3e5ee"/><rect x="251.0" y="257.7" width="30" height="0.9" fill="#e3e5ee"/><rect x="251.0" y="260.7" width="31" height="0.9" fill="#e3e5ee"/><rect x="251.0" y="261.2" width="13" height="0.9" fill="#c5d4f2"/><rect x="251.0" y="265.1" width="24" height="1.3" fill="#b4b8c8"/><rect x="252.0" y="268.8" width="11.5" height="0.9" fill="#d3d6e2"/><rect x="268.5" y="268.8" width="12.5" height="0.9" fill="#d3d6e2"/><rect x="252.0" y="270.2" width="10.0" height="0.9" fill="#e3e5ee"/><rect x="268.5" y="270.2" width="11.0" height="0.9" fill="#e3e5ee"/><rect x="252.0" y="271.6" width="8.5" height="0.9" fill="#e3e5ee"/><rect x="268.5" y="271.6" width="9.5" height="0.9" fill="#e3e5ee"/><rect x="252.0" y="274.0" width="11.5" height="0.9" fill="#d3d6e2"/><rect x="268.5" y="274.0" width="12.5" height="0.9" fill="#d3d6e2"/><rect x="252.0" y="275.4" width="10.0" height="0.9" fill="#e3e5ee"/><rect x="268.5" y="275.4" width="11.0" height="0.9" fill="#e3e5ee"/><rect x="252.0" y="276.8" width="8.5" height="0.9" fill="#e3e5ee"/><rect x="268.5" y="276.8" width="9.5" height="0.9" fill="#e3e5ee"/><rect x="252.0" y="281.4" width="8.5" height="0.9" fill="#c3d3f3"/><rect x="268.5" y="281.4" width="7" height="0.9" fill="#c3d3f3"/><rect x="303.5" y="244.2" width="3.5" height="0.9" fill="#e3e5ee"/><rect x="312.6" y="240.8" width="79.0" height="43.8" fill="#fdfdff" stroke="#e6e9f4" stroke-width="0.6"/><rect x="314.8" y="243.4" width="1.2" height="1.2" fill="#e59ae8"/><rect x="318.6" y="244.2" width="4.6" height="0.9" fill="#e3e5ee"/><rect x="318.6" y="247.2" width="3.2" height="0.9" fill="#e3e5ee"/><rect x="318.6" y="250.2" width="4.6" height="0.9" fill="#e3e5ee"/><rect x="318.6" y="253.2" width="3.2" height="0.9" fill="#e3e5ee"/><rect x="318.6" y="256.2" width="4.6" height="0.9" fill="#e3e5ee"/><rect x="318.6" y="259.2" width="3.2" height="0.9" fill="#e3e5ee"/><rect x="318.6" y="262.2" width="4.6" height="0.9" fill="#e3e5ee"/><rect x="318.6" y="265.2" width="3.2" height="0.9" fill="#e3e5ee"/><rect x="318.6" y="268.2" width="4.6" height="0.9" fill="#e3e5ee"/><rect x="318.6" y="271.2" width="3.2" height="0.9" fill="#e3e5ee"/><rect x="318.6" y="274.2" width="4.6" height="0.9" fill="#e3e5ee"/><rect x="318.6" y="277.2" width="3.2" height="0.9" fill="#e3e5ee"/><rect x="318.6" y="280.2" width="4.6" height="0.9" fill="#e3e5ee"/><rect x="318.6" y="246.4" width="5" height="0.9" fill="#d9b8f2"/><rect x="315.6" y="250.8" width="1.2" height="1.2" fill="#d3d6e2"/><rect x="315.6" y="255.8" width="1.2" height="1.2" fill="#d3d6e2"/><rect x="315.6" y="263.8" width="1.2" height="1.2" fill="#d3d6e2"/><rect x="332.1" y="244.4" width="31" height="6.2" fill="#f1f2f8"/><rect x="333.1" y="246.6" width="11" height="1.5" fill="#b4b8c8"/><rect x="351.6" y="246.0" width="7.5" height="3" fill="#dcc4f4"/><rect x="355.6" y="245.0" width="3" height="1.2" fill="#f0c6d8"/><rect x="332.1" y="253.2" width="31" height="0.9" fill="#e3e5ee"/><rect x="332.1" y="256.2" width="31" height="0.9" fill="#e3e5ee"/><rect x="332.1" y="257.7" width="30" height="0.9" fill="#e3e5ee"/><rect x="332.1" y="260.7" width="31" height="0.9" fill="#e3e5ee"/><rect x="332.1" y="261.2" width="13" height="0.9" fill="#c5d4f2"/><rect x="332.1" y="265.1" width="24" height="1.3" fill="#b4b8c8"/><rect x="333.1" y="268.8" width="11.5" height="0.9" fill="#d3d6e2"/><rect x="349.6" y="268.8" width="12.5" height="0.9" fill="#d3d6e2"/><rect x="333.1" y="270.2" width="10.0" height="0.9" fill="#e3e5ee"/><rect x="349.6" y="270.2" width="11.0" height="0.9" fill="#e3e5ee"/><rect x="333.1" y="271.6" width="8.5" height="0.9" fill="#e3e5ee"/><rect x="349.6" y="271.6" width="9.5" height="0.9" fill="#e3e5ee"/><rect x="333.1" y="274.0" width="11.5" height="0.9" fill="#d3d6e2"/><rect x="349.6" y="274.0" width="12.5" height="0.9" fill="#d3d6e2"/><rect x="333.1" y="275.4" width="10.0" height="0.9" fill="#e3e5ee"/><rect x="349.6" y="275.4" width="11.0" height="0.9" fill="#e3e5ee"/><rect x="333.1" y="276.8" width="8.5" height="0.9" fill="#e3e5ee"/><rect x="349.6" y="276.8" width="9.5" height="0.9" fill="#e3e5ee"/><rect x="333.1" y="281.4" width="8.5" height="0.9" fill="#c3d3f3"/><rect x="349.6" y="281.4" width="7" height="0.9" fill="#c3d3f3"/><rect x="384.6" y="244.2" width="3.5" height="0.9" fill="#e3e5ee"/><rect x="393.7" y="240.8" width="79.0" height="43.8" fill="#fdfdff" stroke="#e6e9f4" stroke-width="0.6"/><rect x="395.9" y="243.4" width="1.2" height="1.2" fill="#e59ae8"/><rect x="399.7" y="244.2" width="4.6" height="0.9" fill="#e3e5ee"/><rect x="399.7" y="247.2" width="3.2" height="0.9" fill="#e3e5ee"/><rect x="399.7" y="250.2" width="4.6" height="0.9" fill="#e3e5ee"/><rect x="399.7" y="253.2" width="3.2" height="0.9" fill="#e3e5ee"/><rect x="399.7" y="256.2" width="4.6" height="0.9" fill="#e3e5ee"/><rect x="399.7" y="259.2" width="3.2" height="0.9" fill="#e3e5ee"/><rect x="399.7" y="262.2" width="4.6" height="0.9" fill="#e3e5ee"/><rect x="399.7" y="265.2" width="3.2" height="0.9" fill="#e3e5ee"/><rect x="399.7" y="268.2" width="4.6" height="0.9" fill="#e3e5ee"/><rect x="399.7" y="271.2" width="3.2" height="0.9" fill="#e3e5ee"/><rect x="399.7" y="274.2" width="4.6" height="0.9" fill="#e3e5ee"/><rect x="399.7" y="277.2" width="3.2" height="0.9" fill="#e3e5ee"/><rect x="399.7" y="280.2" width="4.6" height="0.9" fill="#e3e5ee"/><rect x="399.7" y="246.4" width="5" height="0.9" fill="#d9b8f2"/><rect x="396.7" y="250.8" width="1.2" height="1.2" fill="#d3d6e2"/><rect x="396.7" y="255.8" width="1.2" height="1.2" fill="#d3d6e2"/><rect x="396.7" y="263.8" width="1.2" height="1.2" fill="#d3d6e2"/><rect x="413.2" y="244.4" width="31" height="6.2" fill="#f1f2f8"/><rect x="414.2" y="246.6" width="11" height="1.5" fill="#b4b8c8"/><rect x="432.7" y="246.0" width="7.5" height="3" fill="#dcc4f4"/><rect x="436.7" y="245.0" width="3" height="1.2" fill="#f0c6d8"/><rect x="413.2" y="253.2" width="31" height="0.9" fill="#e3e5ee"/><rect x="413.2" y="256.2" width="31" height="0.9" fill="#e3e5ee"/><rect x="413.2" y="257.7" width="30" height="0.9" fill="#e3e5ee"/><rect x="413.2" y="260.7" width="31" height="0.9" fill="#e3e5ee"/><rect x="413.2" y="261.2" width="13" height="0.9" fill="#c5d4f2"/><rect x="413.2" y="265.1" width="24" height="1.3" fill="#b4b8c8"/><rect x="414.2" y="268.8" width="11.5" height="0.9" fill="#d3d6e2"/><rect x="430.7" y="268.8" width="12.5" height="0.9" fill="#d3d6e2"/><rect x="414.2" y="270.2" width="10.0" height="0.9" fill="#e3e5ee"/><rect x="430.7" y="270.2" width="11.0" height="0.9" fill="#e3e5ee"/><rect x="414.2" y="271.6" width="8.5" height="0.9" fill="#e3e5ee"/><rect x="430.7" y="271.6" width="9.5" height="0.9" fill="#e3e5ee"/><rect x="414.2" y="274.0" width="11.5" height="0.9" fill="#d3d6e2"/><rect x="430.7" y="274.0" width="12.5" height="0.9" fill="#d3d6e2"/><rect x="414.2" y="275.4" width="10.0" height="0.9" fill="#e3e5ee"/><rect x="430.7" y="275.4" width="11.0" height="0.9" fill="#e3e5ee"/><rect x="414.2" y="276.8" width="8.5" height="0.9" fill="#e3e5ee"/><rect x="430.7" y="276.8" width="9.5" height="0.9" fill="#e3e5ee"/><rect x="414.2" y="281.4" width="8.5" height="0.9" fill="#c3d3f3"/><rect x="430.7" y="281.4" width="7" height="0.9" fill="#c3d3f3"/><rect x="461.7" y="244.4" width="5" height="0.9" fill="#d3d6e2"/><rect x="461.7" y="246.4" width="6.5" height="0.9" fill="#d9b8f2"/><rect x="462.2" y="248.4" width="6" height="0.9" fill="#e3e5ee"/><rect x="462.2" y="250.2" width="5" height="0.9" fill="#e3e5ee"/><rect x="462.2" y="252.0" width="4" height="0.9" fill="#e3e5ee"/><rect x="462.2" y="253.8" width="6" height="0.9" fill="#e3e5ee"/><rect x="462.2" y="255.6" width="5" height="0.9" fill="#e3e5ee"/><rect x="462.2" y="257.4" width="4" height="0.9" fill="#e3e5ee"/><rect x="458.1" y="277.0" width="13.6" height="6.6" fill="#e6e7ee"/><rect x="474.7" y="240.8" width="79.0" height="43.8" fill="#fdfdff" stroke="#e6e9f4" stroke-width="0.6"/><rect x="476.9" y="243.4" width="1.2" height="1.2" fill="#e59ae8"/><rect x="480.7" y="244.2" width="4.6" height="0.9" fill="#e3e5ee"/><rect x="480.7" y="247.2" width="3.2" height="0.9" fill="#e3e5ee"/><rect x="480.7" y="250.2" width="4.6" height="0.9" fill="#e3e5ee"/><rect x="480.7" y="253.2" width="3.2" height="0.9" fill="#e3e5ee"/><rect x="480.7" y="256.2" width="4.6" height="0.9" fill="#e3e5ee"/><rect x="480.7" y="259.2" width="3.2" height="0.9" fill="#e3e5ee"/><rect x="480.7" y="262.2" width="4.6" height="0.9" fill="#e3e5ee"/><rect x="480.7" y="265.2" width="3.2" height="0.9" fill="#e3e5ee"/><rect x="480.7" y="268.2" width="4.6" height="0.9" fill="#e3e5ee"/><rect x="480.7" y="271.2" width="3.2" height="0.9" fill="#e3e5ee"/><rect x="480.7" y="274.2" width="4.6" height="0.9" fill="#e3e5ee"/><rect x="480.7" y="277.2" width="3.2" height="0.9" fill="#e3e5ee"/><rect x="480.7" y="280.2" width="4.6" height="0.9" fill="#e3e5ee"/><rect x="480.7" y="246.4" width="5" height="0.9" fill="#d9b8f2"/><rect x="477.7" y="250.8" width="1.2" height="1.2" fill="#d3d6e2"/><rect x="477.7" y="255.8" width="1.2" height="1.2" fill="#d3d6e2"/><rect x="477.7" y="263.8" width="1.2" height="1.2" fill="#d3d6e2"/><rect x="494.2" y="244.4" width="31" height="6.2" fill="#f1f2f8"/><rect x="495.2" y="246.6" width="11" height="1.5" fill="#b4b8c8"/><rect x="513.7" y="246.0" width="7.5" height="3" fill="#dcc4f4"/><rect x="517.7" y="245.0" width="3" height="1.2" fill="#f0c6d8"/><rect x="494.2" y="253.2" width="31" height="0.9" fill="#e3e5ee"/><rect x="494.2" y="256.2" width="31" height="0.9" fill="#e3e5ee"/><rect x="494.2" y="257.7" width="30" height="0.9" fill="#e3e5ee"/><rect x="494.2" y="260.7" width="31" height="0.9" fill="#e3e5ee"/><rect x="494.2" y="261.2" width="13" height="0.9" fill="#c5d4f2"/><rect x="494.2" y="265.1" width="24" height="1.3" fill="#b4b8c8"/><rect x="495.2" y="268.8" width="11.5" height="0.9" fill="#d3d6e2"/><rect x="511.7" y="268.8" width="12.5" height="0.9" fill="#d3d6e2"/><rect x="495.2" y="270.2" width="10.0" height="0.9" fill="#e3e5ee"/><rect x="511.7" y="270.2" width="11.0" height="0.9" fill="#e3e5ee"/><rect x="495.2" y="271.6" width="8.5" height="0.9" fill="#e3e5ee"/><rect x="511.7" y="271.6" width="9.5" height="0.9" fill="#e3e5ee"/><rect x="495.2" y="274.0" width="11.5" height="0.9" fill="#d3d6e2"/><rect x="511.7" y="274.0" width="12.5" height="0.9" fill="#d3d6e2"/><rect x="495.2" y="275.4" width="10.0" height="0.9" fill="#e3e5ee"/><rect x="511.7" y="275.4" width="11.0" height="0.9" fill="#e3e5ee"/><rect x="495.2" y="276.8" width="8.5" height="0.9" fill="#e3e5ee"/><rect x="511.7" y="276.8" width="9.5" height="0.9" fill="#e3e5ee"/><rect x="495.2" y="281.4" width="8.5" height="0.9" fill="#c3d3f3"/><rect x="511.7" y="281.4" width="7" height="0.9" fill="#c3d3f3"/><rect x="542.7" y="244.4" width="5" height="0.9" fill="#d3d6e2"/><rect x="542.7" y="246.4" width="6.5" height="0.9" fill="#d9b8f2"/><rect x="543.2" y="248.4" width="6" height="0.9" fill="#e3e5ee"/><rect x="543.2" y="250.2" width="5" height="0.9" fill="#e3e5ee"/><rect x="543.2" y="252.0" width="4" height="0.9" fill="#e3e5ee"/><rect x="543.2" y="253.8" width="6" height="0.9" fill="#e3e5ee"/><rect x="543.2" y="255.6" width="5" height="0.9" fill="#e3e5ee"/><rect x="543.2" y="257.4" width="4" height="0.9" fill="#e3e5ee"/><rect x="539.1" y="277.0" width="13.6" height="6.6" fill="#2d3342"/><rect x="540.7" y="278.7" width="9" height="0.8" fill="#5d6577"/><rect x="540.7" y="280.9" width="4" height="0.8" fill="#5d6577"/><rect x="546.1" y="280.9" width="4" height="0.8" fill="#5d6577"/><rect x="555.8" y="240.8" width="79.0" height="43.8" fill="#fdfdff" stroke="#e6e9f4" stroke-width="0.6"/><rect x="558.0" y="243.4" width="1.2" height="1.2" fill="#e59ae8"/><rect x="562.8" y="244.2" width="6.5" height="1.2" fill="#b4b8c8"/><rect x="558.8" y="248.8" width="1.2" height="0.9" fill="#d3d6e2"/><rect x="558.8" y="253.8" width="1.2" height="0.9" fill="#d3d6e2"/><rect x="558.8" y="258.8" width="1.2" height="0.9" fill="#d3d6e2"/><rect x="558.8" y="263.8" width="1.2" height="0.9" fill="#d3d6e2"/><rect x="558.8" y="268.8" width="1.2" height="0.9" fill="#d3d6e2"/><rect x="563.1" y="250.1" width="15" height="8.8" fill="#d4d6e2"/><rect x="563.1" y="250.1" width="15" height="1.8" fill="#3c3f50"/><rect x="563.1" y="250.1" width="3.2" height="8.8" fill="#3c3f50"/><rect x="564.8" y="251.3" width="1.1" height="7" fill="#9a5cf0"/><rect x="569.1" y="253.9" width="7.4" height="3.6" fill="#eceef6"/><rect x="563.1" y="260.1" width="5" height="0.9" fill="#d3d6e2"/><rect x="580.0" y="250.1" width="15" height="8.8" fill="#d4d6e2"/><rect x="580.0" y="250.1" width="15" height="1.8" fill="#3c3f50"/><rect x="580.0" y="250.1" width="3.2" height="8.8" fill="#3c3f50"/><rect x="581.6" y="251.3" width="1.1" height="7" fill="#9a5cf0"/><rect x="586.0" y="253.9" width="7.4" height="3.6" fill="#eceef6"/><rect x="580.0" y="260.1" width="5" height="0.9" fill="#d3d6e2"/><rect x="563.1" y="265.6" width="15" height="8.8" fill="#d4d6e2"/><rect x="563.1" y="265.6" width="15" height="1.8" fill="#3c3f50"/><rect x="563.1" y="265.6" width="3.2" height="8.8" fill="#3c3f50"/><rect x="564.8" y="266.8" width="1.1" height="7" fill="#9a5cf0"/><rect x="569.1" y="269.4" width="7.4" height="3.6" fill="#eceef6"/><rect x="563.1" y="275.6" width="5" height="0.9" fill="#d3d6e2"/><rect x="582.4" y="251.2" width="1" height="7" fill="#e0507a"/><rect x="573.1" y="271.2" width="4.4" height="2" fill="#a64bf2"/><rect x="563.0" y="277.2" width="4" height="0.9" fill="#b5c8f2"/><rect x="596.8" y="247.3" width="9" height="0.9" fill="#e3e5ee"/><rect x="609.8" y="247.3" width="9" height="0.9" fill="#e3e5ee"/><rect x="596.8" y="264.3" width="9" height="0.9" fill="#e3e5ee"/><rect x="609.8" y="264.3" width="9" height="0.9" fill="#e3e5ee"/><rect x="620.1" y="277.0" width="13.6" height="6.6" fill="#2d3342"/><rect x="621.8" y="278.7" width="9" height="0.8" fill="#5d6577"/><rect x="621.8" y="280.9" width="4" height="0.8" fill="#5d6577"/><rect x="627.1" y="280.9" width="4" height="0.8" fill="#5d6577"/><rect x="636.8" y="240.8" width="79.0" height="43.8" fill="#fdfdff" stroke="#e6e9f4" stroke-width="0.6"/><rect x="639.0" y="243.4" width="1.2" height="1.2" fill="#e59ae8"/><rect x="643.8" y="244.2" width="6.5" height="1.2" fill="#b4b8c8"/><rect x="639.8" y="248.8" width="1.2" height="0.9" fill="#d3d6e2"/><rect x="639.8" y="253.8" width="1.2" height="0.9" fill="#d3d6e2"/><rect x="639.8" y="258.8" width="1.2" height="0.9" fill="#d3d6e2"/><rect x="639.8" y="263.8" width="1.2" height="0.9" fill="#d3d6e2"/><rect x="639.8" y="268.8" width="1.2" height="0.9" fill="#d3d6e2"/><rect x="644.2" y="250.1" width="15" height="8.8" fill="#d4d6e2"/><rect x="644.2" y="250.1" width="15" height="1.8" fill="#3c3f50"/><rect x="644.2" y="250.1" width="3.2" height="8.8" fill="#3c3f50"/><rect x="645.8" y="251.3" width="1.1" height="7" fill="#9a5cf0"/><rect x="650.2" y="253.9" width="7.4" height="3.6" fill="#eceef6"/><rect x="644.2" y="260.1" width="5" height="0.9" fill="#d3d6e2"/><rect x="661.1" y="250.1" width="15" height="8.8" fill="#d4d6e2"/><rect x="661.1" y="250.1" width="15" height="1.8" fill="#3c3f50"/><rect x="661.1" y="250.1" width="3.2" height="8.8" fill="#3c3f50"/><rect x="662.7" y="251.3" width="1.1" height="7" fill="#9a5cf0"/><rect x="667.1" y="253.9" width="7.4" height="3.6" fill="#eceef6"/><rect x="661.1" y="260.1" width="5" height="0.9" fill="#d3d6e2"/><rect x="644.2" y="265.6" width="15" height="8.8" fill="#d4d6e2"/><rect x="644.2" y="265.6" width="15" height="1.8" fill="#3c3f50"/><rect x="644.2" y="265.6" width="3.2" height="8.8" fill="#3c3f50"/><rect x="645.8" y="266.8" width="1.1" height="7" fill="#9a5cf0"/><rect x="650.2" y="269.4" width="7.4" height="3.6" fill="#eceef6"/><rect x="644.2" y="275.6" width="5" height="0.9" fill="#d3d6e2"/><rect x="663.4" y="251.2" width="1" height="7" fill="#e0507a"/><rect x="654.2" y="271.2" width="4.4" height="2" fill="#a64bf2"/><rect x="644.0" y="277.2" width="4" height="0.9" fill="#b5c8f2"/><rect x="677.8" y="247.3" width="9" height="0.9" fill="#e3e5ee"/><rect x="690.8" y="247.3" width="9" height="0.9" fill="#e3e5ee"/><rect x="677.8" y="264.3" width="9" height="0.9" fill="#e3e5ee"/><rect x="690.8" y="264.3" width="9" height="0.9" fill="#e3e5ee"/><rect x="701.2" y="277.0" width="13.6" height="6.6" fill="#2d3342"/><rect x="702.8" y="278.7" width="9" height="0.8" fill="#5d6577"/><rect x="702.8" y="280.9" width="4" height="0.8" fill="#5d6577"/><rect x="708.2" y="280.9" width="4" height="0.8" fill="#5d6577"/><rect x="717.9" y="240.8" width="79.0" height="43.8" fill="#fdfdff" stroke="#e6e9f4" stroke-width="0.6"/><rect x="720.1" y="243.4" width="1.2" height="1.2" fill="#e59ae8"/><rect x="724.9" y="244.2" width="6.5" height="1.2" fill="#b4b8c8"/><rect x="720.9" y="248.8" width="1.2" height="0.9" fill="#d3d6e2"/><rect x="720.9" y="253.8" width="1.2" height="0.9" fill="#d3d6e2"/><rect x="720.9" y="258.8" width="1.2" height="0.9" fill="#d3d6e2"/><rect x="720.9" y="263.8" width="1.2" height="0.9" fill="#d3d6e2"/><rect x="720.9" y="268.8" width="1.2" height="0.9" fill="#d3d6e2"/><rect x="725.2" y="250.1" width="15" height="8.8" fill="#d4d6e2"/><rect x="725.2" y="250.1" width="15" height="1.8" fill="#3c3f50"/><rect x="725.2" y="250.1" width="3.2" height="8.8" fill="#3c3f50"/><rect x="726.9" y="251.3" width="1.1" height="7" fill="#9a5cf0"/><rect x="731.2" y="253.9" width="7.4" height="3.6" fill="#eceef6"/><rect x="725.2" y="260.1" width="5" height="0.9" fill="#d3d6e2"/><rect x="742.1" y="250.1" width="15" height="8.8" fill="#d4d6e2"/><rect x="742.1" y="250.1" width="15" height="1.8" fill="#3c3f50"/><rect x="742.1" y="250.1" width="3.2" height="8.8" fill="#3c3f50"/><rect x="743.8" y="251.3" width="1.1" height="7" fill="#9a5cf0"/><rect x="748.1" y="253.9" width="7.4" height="3.6" fill="#eceef6"/><rect x="742.1" y="260.1" width="5" height="0.9" fill="#d3d6e2"/><rect x="725.2" y="265.6" width="15" height="8.8" fill="#d4d6e2"/><rect x="725.2" y="265.6" width="15" height="1.8" fill="#3c3f50"/><rect x="725.2" y="265.6" width="3.2" height="8.8" fill="#3c3f50"/><rect x="726.9" y="266.8" width="1.1" height="7" fill="#9a5cf0"/><rect x="731.2" y="269.4" width="7.4" height="3.6" fill="#eceef6"/><rect x="725.2" y="275.6" width="5" height="0.9" fill="#d3d6e2"/><rect x="744.5" y="251.2" width="1" height="7" fill="#e0507a"/><rect x="735.2" y="271.2" width="4.4" height="2" fill="#a64bf2"/><rect x="725.1" y="277.2" width="4" height="0.9" fill="#b5c8f2"/><rect x="758.9" y="247.3" width="9" height="0.9" fill="#e3e5ee"/><rect x="771.9" y="247.3" width="9" height="0.9" fill="#e3e5ee"/><rect x="758.9" y="264.3" width="9" height="0.9" fill="#e3e5ee"/><rect x="771.9" y="264.3" width="9" height="0.9" fill="#e3e5ee"/><rect x="782.2" y="277.0" width="13.6" height="6.6" fill="#2d3342"/><rect x="783.9" y="278.7" width="9" height="0.8" fill="#5d6577"/><rect x="783.9" y="280.9" width="4" height="0.8" fill="#5d6577"/><rect x="789.2" y="280.9" width="4" height="0.8" fill="#5d6577"/><rect x="798.9" y="240.8" width="79.0" height="43.8" fill="#fdfdff" stroke="#e6e9f4" stroke-width="0.6"/><rect x="801.1" y="243.4" width="1.2" height="1.2" fill="#e59ae8"/><rect x="806.4" y="245.4" width="10.5" height="1.2" fill="#b4b8c8"/><rect x="801.9" y="248.2" width="1.2" height="0.9" fill="#d3d6e2"/><rect x="801.9" y="252.4" width="1.2" height="0.9" fill="#d3d6e2"/><rect x="801.9" y="256.6" width="1.2" height="0.9" fill="#d3d6e2"/><rect x="801.9" y="260.8" width="1.2" height="0.9" fill="#d3d6e2"/><rect x="801.9" y="265.0" width="1.2" height="0.9" fill="#d3d6e2"/><rect x="801.9" y="269.2" width="1.2" height="0.9" fill="#d3d6e2"/><rect x="801.9" y="273.4" width="1.2" height="0.9" fill="#d3d6e2"/><rect x="801.9" y="277.6" width="1.2" height="0.9" fill="#d3d6e2"/><rect x="807.9" y="250.4" width="22" height="0.9" fill="#f0cdd6"/><rect x="829.9" y="250.4" width="8" height="0.9" fill="#d3d6e2"/><rect x="808.9" y="252.6" width="5" height="0.9" fill="#d3d6e2"/><rect x="808.9" y="254.4" width="6" height="0.9" fill="#d3d6e2"/><rect x="808.9" y="256.2" width="4" height="0.9" fill="#d3d6e2"/><rect x="807.9" y="259.0" width="14" height="0.9" fill="#d3d6e2"/><rect x="807.9" y="261.0" width="16" height="0.9" fill="#b6caf3"/><rect x="865.9" y="244.4" width="5" height="0.9" fill="#d3d6e2"/><rect x="840.9" y="247.8" width="35" height="18" fill="#f9f9fd"/><rect x="840.9" y="266.8" width="35" height="14" fill="#f9f9fd"/><rect x="855.4" y="258.2" width="1.6" height="1.6" fill="#a9cdf2"/><rect x="857.5" y="257.4" width="3" height="0.9" fill="#d3d6e2"/><rect x="841.9" y="268.4" width="7" height="0.9" fill="#d3d6e2"/><rect x="872.9" y="268.4" width="1.2" height="0.9" fill="#d3d6e2"/><rect x="863.3" y="277.0" width="13.6" height="6.6" fill="#2d3342"/><rect x="864.9" y="278.7" width="9" height="0.8" fill="#5d6577"/><rect x="864.9" y="280.9" width="4" height="0.8" fill="#5d6577"/><rect x="870.3" y="280.9" width="4" height="0.8" fill="#5d6577"/><rect x="879.9" y="240.8" width="79.0" height="43.8" fill="#fdfdff" stroke="#e6e9f4" stroke-width="0.6"/><rect x="882.1" y="243.4" width="1.2" height="1.2" fill="#e59ae8"/><rect x="887.4" y="245.4" width="10.5" height="1.2" fill="#b4b8c8"/><rect x="882.9" y="248.2" width="1.2" height="0.9" fill="#d3d6e2"/><rect x="882.9" y="252.4" width="1.2" height="0.9" fill="#d3d6e2"/><rect x="882.9" y="256.6" width="1.2" height="0.9" fill="#d3d6e2"/><rect x="882.9" y="260.8" width="1.2" height="0.9" fill="#d3d6e2"/><rect x="882.9" y="265.0" width="1.2" height="0.9" fill="#d3d6e2"/><rect x="882.9" y="269.2" width="1.2" height="0.9" fill="#d3d6e2"/><rect x="882.9" y="273.4" width="1.2" height="0.9" fill="#d3d6e2"/><rect x="882.9" y="277.6" width="1.2" height="0.9" fill="#d3d6e2"/><rect x="888.9" y="250.4" width="22" height="0.9" fill="#f0cdd6"/><rect x="910.9" y="250.4" width="8" height="0.9" fill="#d3d6e2"/><rect x="889.9" y="252.6" width="5" height="0.9" fill="#d3d6e2"/><rect x="889.9" y="254.4" width="6" height="0.9" fill="#d3d6e2"/><rect x="889.9" y="256.2" width="4" height="0.9" fill="#d3d6e2"/><rect x="888.9" y="259.0" width="14" height="0.9" fill="#d3d6e2"/><rect x="888.9" y="261.0" width="16" height="0.9" fill="#b6caf3"/><rect x="946.9" y="244.4" width="5" height="0.9" fill="#d3d6e2"/><rect x="921.9" y="247.8" width="35" height="18" fill="#f9f9fd"/><rect x="921.9" y="266.8" width="35" height="14" fill="#f9f9fd"/><rect x="936.4" y="258.2" width="1.6" height="1.6" fill="#a9cdf2"/><rect x="938.5" y="257.4" width="3" height="0.9" fill="#d3d6e2"/><rect x="922.9" y="268.4" width="7" height="0.9" fill="#d3d6e2"/><rect x="953.9" y="268.4" width="1.2" height="0.9" fill="#d3d6e2"/><rect x="944.3" y="277.0" width="13.6" height="6.6" fill="#2d3342"/><rect x="945.9" y="278.7" width="9" height="0.8" fill="#5d6577"/><rect x="945.9" y="280.9" width="4" height="0.8" fill="#5d6577"/><rect x="951.3" y="280.9" width="4" height="0.8" fill="#5d6577"/><rect x="961.0" y="240.8" width="79.0" height="43.8" fill="#fdfdff" stroke="#e6e9f4" stroke-width="0.6"/><rect x="963.2" y="243.4" width="1.2" height="1.2" fill="#e59ae8"/><rect x="968.5" y="245.4" width="10.5" height="1.2" fill="#b4b8c8"/><rect x="964.0" y="248.2" width="1.2" height="0.9" fill="#d3d6e2"/><rect x="964.0" y="252.4" width="1.2" height="0.9" fill="#d3d6e2"/><rect x="964.0" y="256.6" width="1.2" height="0.9" fill="#d3d6e2"/><rect x="964.0" y="260.8" width="1.2" height="0.9" fill="#d3d6e2"/><rect x="964.0" y="265.0" width="1.2" height="0.9" fill="#d3d6e2"/><rect x="964.0" y="269.2" width="1.2" height="0.9" fill="#d3d6e2"/><rect x="964.0" y="273.4" width="1.2" height="0.9" fill="#d3d6e2"/><rect x="964.0" y="277.6" width="1.2" height="0.9" fill="#d3d6e2"/><rect x="970.0" y="250.4" width="22" height="0.9" fill="#f0cdd6"/><rect x="992.0" y="250.4" width="8" height="0.9" fill="#d3d6e2"/><rect x="971.0" y="252.6" width="5" height="0.9" fill="#d3d6e2"/><rect x="971.0" y="254.4" width="6" height="0.9" fill="#d3d6e2"/><rect x="971.0" y="256.2" width="4" height="0.9" fill="#d3d6e2"/><rect x="970.0" y="259.0" width="14" height="0.9" fill="#d3d6e2"/><rect x="970.0" y="261.0" width="16" height="0.9" fill="#b6caf3"/><rect x="1028.0" y="244.4" width="5" height="0.9" fill="#d3d6e2"/><rect x="1003.0" y="247.8" width="35" height="18" fill="#f9f9fd"/><rect x="1003.0" y="266.8" width="35" height="14" fill="#f9f9fd"/><rect x="1017.5" y="258.2" width="1.6" height="1.6" fill="#a9cdf2"/><rect x="1019.6" y="257.4" width="3" height="0.9" fill="#d3d6e2"/><rect x="1004.0" y="268.4" width="7" height="0.9" fill="#d3d6e2"/><rect x="1035.0" y="268.4" width="1.2" height="0.9" fill="#d3d6e2"/><rect x="1025.4" y="277.0" width="13.6" height="6.6" fill="#2d3342"/><rect x="1027.0" y="278.7" width="9" height="0.8" fill="#5d6577"/><rect x="1027.0" y="280.9" width="4" height="0.8" fill="#5d6577"/><rect x="1032.4" y="280.9" width="4" height="0.8" fill="#5d6577"/><rect x="1042.0" y="240.8" width="79.0" height="43.8" fill="#fdfdff" stroke="#e6e9f4" stroke-width="0.6"/><rect x="1044.2" y="243.4" width="1.2" height="1.2" fill="#e59ae8"/><rect x="1049.5" y="245.4" width="10.5" height="1.2" fill="#b4b8c8"/><rect x="1045.0" y="248.2" width="1.2" height="0.9" fill="#d3d6e2"/><rect x="1045.0" y="252.4" width="1.2" height="0.9" fill="#d3d6e2"/><rect x="1045.0" y="256.6" width="1.2" height="0.9" fill="#d3d6e2"/><rect x="1045.0" y="260.8" width="1.2" height="0.9" fill="#d3d6e2"/><rect x="1045.0" y="265.0" width="1.2" height="0.9" fill="#d3d6e2"/><rect x="1045.0" y="269.2" width="1.2" height="0.9" fill="#d3d6e2"/><rect x="1045.0" y="273.4" width="1.2" height="0.9" fill="#d3d6e2"/><rect x="1045.0" y="277.6" width="1.2" height="0.9" fill="#d3d6e2"/><rect x="1051.0" y="250.4" width="22" height="0.9" fill="#f0cdd6"/><rect x="1073.0" y="250.4" width="8" height="0.9" fill="#d3d6e2"/><rect x="1052.0" y="252.6" width="5" height="0.9" fill="#d3d6e2"/><rect x="1052.0" y="254.4" width="6" height="0.9" fill="#d3d6e2"/><rect x="1052.0" y="256.2" width="4" height="0.9" fill="#d3d6e2"/><rect x="1051.0" y="259.0" width="14" height="0.9" fill="#d3d6e2"/><rect x="1051.0" y="261.0" width="16" height="0.9" fill="#b6caf3"/><rect x="1109.0" y="244.4" width="5" height="0.9" fill="#d3d6e2"/><rect x="1084.0" y="247.8" width="35" height="18" fill="#f9f9fd"/><rect x="1084.0" y="266.8" width="35" height="14" fill="#f9f9fd"/><rect x="1098.5" y="258.2" width="1.6" height="1.6" fill="#a9cdf2"/><rect x="1100.6" y="257.4" width="3" height="0.9" fill="#d3d6e2"/><rect x="1085.0" y="268.4" width="7" height="0.9" fill="#d3d6e2"/><rect x="1116.0" y="268.4" width="1.2" height="0.9" fill="#d3d6e2"/><rect x="1106.5" y="277.0" width="13.6" height="6.6" fill="#2d3342"/><rect x="1108.0" y="278.7" width="9" height="0.8" fill="#5d6577"/><rect x="1108.0" y="280.9" width="4" height="0.8" fill="#5d6577"/><rect x="1113.5" y="280.9" width="4" height="0.8" fill="#5d6577"/><rect x="1123.1" y="240.8" width="79.0" height="43.8" fill="#fdfdff" stroke="#e6e9f4" stroke-width="0.6"/><rect x="1125.3" y="243.4" width="1.2" height="1.2" fill="#e59ae8"/><rect x="1130.6" y="245.4" width="10.5" height="1.2" fill="#b4b8c8"/><rect x="1126.1" y="248.2" width="1.2" height="0.9" fill="#d3d6e2"/><rect x="1126.1" y="252.4" width="1.2" height="0.9" fill="#d3d6e2"/><rect x="1126.1" y="256.6" width="1.2" height="0.9" fill="#d3d6e2"/><rect x="1126.1" y="260.8" width="1.2" height="0.9" fill="#d3d6e2"/><rect x="1126.1" y="265.0" width="1.2" height="0.9" fill="#d3d6e2"/><rect x="1126.1" y="269.2" width="1.2" height="0.9" fill="#d3d6e2"/><rect x="1126.1" y="273.4" width="1.2" height="0.9" fill="#d3d6e2"/><rect x="1126.1" y="277.6" width="1.2" height="0.9" fill="#d3d6e2"/><rect x="1132.1" y="250.4" width="22" height="0.9" fill="#f0cdd6"/><rect x="1154.1" y="250.4" width="8" height="0.9" fill="#d3d6e2"/><rect x="1133.1" y="252.6" width="5" height="0.9" fill="#d3d6e2"/><rect x="1133.1" y="254.4" width="6" height="0.9" fill="#d3d6e2"/><rect x="1133.1" y="256.2" width="4" height="0.9" fill="#d3d6e2"/><rect x="1132.1" y="259.0" width="14" height="0.9" fill="#d3d6e2"/><rect x="1132.1" y="261.0" width="16" height="0.9" fill="#b6caf3"/><rect x="1190.1" y="244.4" width="5" height="0.9" fill="#d3d6e2"/><rect x="1165.1" y="247.8" width="35" height="18" fill="#f9f9fd"/><rect x="1165.1" y="266.8" width="35" height="14" fill="#f9f9fd"/><rect x="1179.6" y="258.2" width="1.6" height="1.6" fill="#a9cdf2"/><rect x="1181.7" y="257.4" width="3" height="0.9" fill="#d3d6e2"/><rect x="1166.1" y="268.4" width="7" height="0.9" fill="#d3d6e2"/><rect x="1197.1" y="268.4" width="1.2" height="0.9" fill="#d3d6e2"/><rect x="1187.5" y="277.0" width="13.6" height="6.6" fill="#2d3342"/><rect x="1189.1" y="278.7" width="9" height="0.8" fill="#5d6577"/><rect x="1189.1" y="280.9" width="4" height="0.8" fill="#5d6577"/><rect x="1194.5" y="280.9" width="4" height="0.8" fill="#5d6577"/><rect x="1204.2" y="240.8" width="79.0" height="43.8" fill="#fdfdff" stroke="#e6e9f4" stroke-width="0.6"/><rect x="1206.4" y="243.4" width="1.2" height="1.2" fill="#e59ae8"/><rect x="1211.7" y="245.4" width="10.5" height="1.2" fill="#b4b8c8"/><rect x="1207.2" y="248.2" width="1.2" height="0.9" fill="#d3d6e2"/><rect x="1207.2" y="252.4" width="1.2" height="0.9" fill="#d3d6e2"/><rect x="1207.2" y="256.6" width="1.2" height="0.9" fill="#d3d6e2"/><rect x="1207.2" y="260.8" width="1.2" height="0.9" fill="#d3d6e2"/><rect x="1207.2" y="265.0" width="1.2" height="0.9" fill="#d3d6e2"/><rect x="1207.2" y="269.2" width="1.2" height="0.9" fill="#d3d6e2"/><rect x="1207.2" y="273.4" width="1.2" height="0.9" fill="#d3d6e2"/><rect x="1207.2" y="277.6" width="1.2" height="0.9" fill="#d3d6e2"/><rect x="1213.2" y="250.4" width="22" height="0.9" fill="#f0cdd6"/><rect x="1235.2" y="250.4" width="8" height="0.9" fill="#d3d6e2"/><rect x="1214.2" y="252.6" width="5" height="0.9" fill="#d3d6e2"/><rect x="1214.2" y="254.4" width="6" height="0.9" fill="#d3d6e2"/><rect x="1214.2" y="256.2" width="4" height="0.9" fill="#d3d6e2"/><rect x="1213.2" y="259.0" width="14" height="0.9" fill="#d3d6e2"/><rect x="1213.2" y="261.0" width="16" height="0.9" fill="#b6caf3"/><rect x="1271.2" y="244.4" width="5" height="0.9" fill="#d3d6e2"/><rect x="1246.2" y="247.8" width="35" height="18" fill="#f9f9fd"/><rect x="1246.2" y="266.8" width="35" height="14" fill="#f9f9fd"/><rect x="1260.7" y="258.2" width="1.6" height="1.6" fill="#a9cdf2"/><rect x="1262.8" y="257.4" width="3" height="0.9" fill="#d3d6e2"/><rect x="1247.2" y="268.4" width="7" height="0.9" fill="#d3d6e2"/><rect x="1278.2" y="268.4" width="1.2" height="0.9" fill="#d3d6e2"/><rect x="1268.6" y="277.0" width="13.6" height="6.6" fill="#2d3342"/><rect x="1270.2" y="278.7" width="9" height="0.8" fill="#5d6577"/><rect x="1270.2" y="280.9" width="4" height="0.8" fill="#5d6577"/><rect x="1275.6" y="280.9" width="4" height="0.8" fill="#5d6577"/><rect x="1285.2" y="240.8" width="79.0" height="43.8" fill="#fdfdff" stroke="#e6e9f4" stroke-width="0.6"/><rect x="1287.4" y="243.4" width="1.2" height="1.2" fill="#e59ae8"/><rect x="1292.7" y="245.4" width="10.5" height="1.2" fill="#b4b8c8"/><rect x="1288.2" y="248.2" width="1.2" height="0.9" fill="#d3d6e2"/><rect x="1288.2" y="252.4" width="1.2" height="0.9" fill="#d3d6e2"/><rect x="1288.2" y="256.6" width="1.2" height="0.9" fill="#d3d6e2"/><rect x="1288.2" y="260.8" width="1.2" height="0.9" fill="#d3d6e2"/><rect x="1288.2" y="265.0" width="1.2" height="0.9" fill="#d3d6e2"/><rect x="1288.2" y="269.2" width="1.2" height="0.9" fill="#d3d6e2"/><rect x="1288.2" y="273.4" width="1.2" height="0.9" fill="#d3d6e2"/><rect x="1288.2" y="277.6" width="1.2" height="0.9" fill="#d3d6e2"/><rect x="1294.2" y="250.4" width="22" height="0.9" fill="#f0cdd6"/><rect x="1316.2" y="250.4" width="8" height="0.9" fill="#d3d6e2"/><rect x="1295.2" y="252.6" width="5" height="0.9" fill="#d3d6e2"/><rect x="1295.2" y="254.4" width="6" height="0.9" fill="#d3d6e2"/><rect x="1295.2" y="256.2" width="4" height="0.9" fill="#d3d6e2"/><rect x="1294.2" y="259.0" width="14" height="0.9" fill="#d3d6e2"/><rect x="1294.2" y="261.0" width="16" height="0.9" fill="#b6caf3"/><rect x="1352.2" y="244.4" width="5" height="0.9" fill="#d3d6e2"/><rect x="1327.2" y="247.8" width="35" height="18" fill="#f9f9fd"/><rect x="1327.2" y="266.8" width="35" height="14" fill="#f9f9fd"/><rect x="1341.7" y="258.2" width="1.6" height="1.6" fill="#a9cdf2"/><rect x="1343.8" y="257.4" width="3" height="0.9" fill="#d3d6e2"/><rect x="1328.2" y="268.4" width="7" height="0.9" fill="#d3d6e2"/><rect x="1359.2" y="268.4" width="1.2" height="0.9" fill="#d3d6e2"/><rect x="1349.6" y="277.0" width="13.6" height="6.6" fill="#2d3342"/><rect x="1351.2" y="278.7" width="9" height="0.8" fill="#5d6577"/><rect x="1351.2" y="280.9" width="4" height="0.8" fill="#5d6577"/><rect x="1356.6" y="280.9" width="4" height="0.8" fill="#5d6577"/><rect x="1366.2" y="240.8" width="79.0" height="43.8" fill="#fdfdff" stroke="#e6e9f4" stroke-width="0.6"/><rect x="1368.5" y="243.4" width="1.2" height="1.2" fill="#e59ae8"/><rect x="1373.8" y="245.4" width="10.5" height="1.2" fill="#b4b8c8"/><rect x="1369.2" y="248.2" width="1.2" height="0.9" fill="#d3d6e2"/><rect x="1369.2" y="252.4" width="1.2" height="0.9" fill="#d3d6e2"/><rect x="1369.2" y="256.6" width="1.2" height="0.9" fill="#d3d6e2"/><rect x="1369.2" y="260.8" width="1.2" height="0.9" fill="#d3d6e2"/><rect x="1369.2" y="265.0" width="1.2" height="0.9" fill="#d3d6e2"/><rect x="1369.2" y="269.2" width="1.2" height="0.9" fill="#d3d6e2"/><rect x="1369.2" y="273.4" width="1.2" height="0.9" fill="#d3d6e2"/><rect x="1369.2" y="277.6" width="1.2" height="0.9" fill="#d3d6e2"/><rect x="1375.2" y="250.4" width="22" height="0.9" fill="#f0cdd6"/><rect x="1397.2" y="250.4" width="8" height="0.9" fill="#d3d6e2"/><rect x="1376.2" y="252.6" width="5" height="0.9" fill="#d3d6e2"/><rect x="1376.2" y="254.4" width="6" height="0.9" fill="#d3d6e2"/><rect x="1376.2" y="256.2" width="4" height="0.9" fill="#d3d6e2"/><rect x="1375.2" y="259.0" width="14" height="0.9" fill="#d3d6e2"/><rect x="1375.2" y="261.0" width="16" height="0.9" fill="#b6caf3"/><rect x="1433.2" y="244.4" width="5" height="0.9" fill="#d3d6e2"/><rect x="1408.2" y="247.8" width="35" height="18" fill="#f9f9fd"/><rect x="1408.2" y="266.8" width="35" height="14" fill="#f9f9fd"/><rect x="1422.8" y="258.2" width="1.6" height="1.6" fill="#a9cdf2"/><rect x="1424.8" y="257.4" width="3" height="0.9" fill="#d3d6e2"/><rect x="1409.2" y="268.4" width="7" height="0.9" fill="#d3d6e2"/><rect x="1440.2" y="268.4" width="1.2" height="0.9" fill="#d3d6e2"/><rect x="1430.7" y="277.0" width="13.6" height="6.6" fill="#2d3342"/><rect x="1432.2" y="278.7" width="9" height="0.8" fill="#5d6577"/><rect x="1432.2" y="280.9" width="4" height="0.8" fill="#5d6577"/><rect x="1437.7" y="280.9" width="4" height="0.8" fill="#5d6577"/><rect x="1447.3" y="240.8" width="79.0" height="43.8" fill="#fdfdff" stroke="#e6e9f4" stroke-width="0.6"/><rect x="1449.5" y="243.4" width="1.2" height="1.2" fill="#e59ae8"/><rect x="1454.8" y="245.4" width="10.5" height="1.2" fill="#b4b8c8"/><rect x="1450.3" y="248.2" width="1.2" height="0.9" fill="#d3d6e2"/><rect x="1450.3" y="252.4" width="1.2" height="0.9" fill="#d3d6e2"/><rect x="1450.3" y="256.6" width="1.2" height="0.9" fill="#d3d6e2"/><rect x="1450.3" y="260.8" width="1.2" height="0.9" fill="#d3d6e2"/><rect x="1450.3" y="265.0" width="1.2" height="0.9" fill="#d3d6e2"/><rect x="1450.3" y="269.2" width="1.2" height="0.9" fill="#d3d6e2"/><rect x="1450.3" y="273.4" width="1.2" height="0.9" fill="#d3d6e2"/><rect x="1450.3" y="277.6" width="1.2" height="0.9" fill="#d3d6e2"/><rect x="1456.3" y="250.4" width="22" height="0.9" fill="#f0cdd6"/><rect x="1478.3" y="250.4" width="8" height="0.9" fill="#d3d6e2"/><rect x="1457.3" y="252.6" width="5" height="0.9" fill="#d3d6e2"/><rect x="1457.3" y="254.4" width="6" height="0.9" fill="#d3d6e2"/><rect x="1457.3" y="256.2" width="4" height="0.9" fill="#d3d6e2"/><rect x="1456.3" y="259.0" width="14" height="0.9" fill="#d3d6e2"/><rect x="1456.3" y="261.0" width="16" height="0.9" fill="#b6caf3"/><rect x="1514.3" y="244.4" width="5" height="0.9" fill="#d3d6e2"/><rect x="1489.3" y="247.8" width="35" height="18" fill="#f9f9fd"/><rect x="1489.3" y="266.8" width="35" height="14" fill="#f9f9fd"/><rect x="1503.8" y="258.2" width="1.6" height="1.6" fill="#a9cdf2"/><rect x="1505.9" y="257.4" width="3" height="0.9" fill="#d3d6e2"/><rect x="1490.3" y="268.4" width="7" height="0.9" fill="#d3d6e2"/><rect x="1521.3" y="268.4" width="1.2" height="0.9" fill="#d3d6e2"/><rect x="1511.7" y="277.0" width="13.6" height="6.6" fill="#2d3342"/><rect x="1513.3" y="278.7" width="9" height="0.8" fill="#5d6577"/><rect x="1513.3" y="280.9" width="4" height="0.8" fill="#5d6577"/><rect x="1518.7" y="280.9" width="4" height="0.8" fill="#5d6577"/><rect x="1528.3" y="240.8" width="79.0" height="43.8" fill="#fdfdff" stroke="#e6e9f4" stroke-width="0.6"/><rect x="1530.5" y="243.4" width="1.2" height="1.2" fill="#e59ae8"/><rect x="1535.8" y="245.4" width="10.5" height="1.2" fill="#b4b8c8"/><rect x="1531.3" y="248.2" width="1.2" height="0.9" fill="#d3d6e2"/><rect x="1531.3" y="252.4" width="1.2" height="0.9" fill="#d3d6e2"/><rect x="1531.3" y="256.6" width="1.2" height="0.9" fill="#d3d6e2"/><rect x="1531.3" y="260.8" width="1.2" height="0.9" fill="#d3d6e2"/><rect x="1531.3" y="265.0" width="1.2" height="0.9" fill="#d3d6e2"/><rect x="1531.3" y="269.2" width="1.2" height="0.9" fill="#d3d6e2"/><rect x="1531.3" y="273.4" width="1.2" height="0.9" fill="#d3d6e2"/><rect x="1531.3" y="277.6" width="1.2" height="0.9" fill="#d3d6e2"/><rect x="1537.3" y="250.4" width="22" height="0.9" fill="#f0cdd6"/><rect x="1559.3" y="250.4" width="8" height="0.9" fill="#d3d6e2"/><rect x="1538.3" y="252.6" width="5" height="0.9" fill="#d3d6e2"/><rect x="1538.3" y="254.4" width="6" height="0.9" fill="#d3d6e2"/><rect x="1538.3" y="256.2" width="4" height="0.9" fill="#d3d6e2"/><rect x="1537.3" y="259.0" width="14" height="0.9" fill="#d3d6e2"/><rect x="1537.3" y="261.0" width="16" height="0.9" fill="#b6caf3"/><rect x="1595.3" y="244.4" width="5" height="0.9" fill="#d3d6e2"/><rect x="1570.3" y="247.8" width="35" height="18" fill="#f9f9fd"/><rect x="1570.3" y="266.8" width="35" height="14" fill="#f9f9fd"/><rect x="1584.8" y="258.2" width="1.6" height="1.6" fill="#a9cdf2"/><rect x="1586.9" y="257.4" width="3" height="0.9" fill="#d3d6e2"/><rect x="1571.3" y="268.4" width="7" height="0.9" fill="#d3d6e2"/><rect x="1602.3" y="268.4" width="1.2" height="0.9" fill="#d3d6e2"/><rect x="1592.8" y="277.0" width="13.6" height="6.6" fill="#2d3342"/><rect x="1594.3" y="278.7" width="9" height="0.8" fill="#5d6577"/><rect x="1594.3" y="280.9" width="4" height="0.8" fill="#5d6577"/><rect x="1599.8" y="280.9" width="4" height="0.8" fill="#5d6577"/></svg>
<div style="left:68.00px;top:162.00px;width:245.30px;height:125.00px;background:rgba(84,130,235,0.225);"></div>
<div style="left:313.30px;top:162.00px;width:14.30px;height:28.00px;background:rgba(84,130,235,0.225);"></div>
<div style="left:327.60px;top:162.00px;width:1204.40px;height:125.00px;background:rgba(84,130,235,0.225);"></div>
<div style="left:215.10px;top:162.00px;width:1.00px;height:78.50px;background:#bccff6;"></div>
<div class="t" style="right:1388.80px;top:159.20px;font-size:14.7px;color:#3c4254;letter-spacing:0.55px;">58 ms</div>
<div style="left:361.50px;top:162.00px;width:1.00px;height:78.50px;background:#bccff6;"></div>
<div class="t" style="right:1242.40px;top:159.20px;font-size:14.7px;color:#3c4254;letter-spacing:0.62px;">1,058 ms</div>
<div style="left:507.90px;top:162.00px;width:1.00px;height:78.50px;background:#bccff6;"></div>
<div class="t" style="right:1096.00px;top:159.20px;font-size:14.7px;color:#3c4254;letter-spacing:0.62px;">2,058 ms</div>
<div style="left:654.30px;top:162.00px;width:1.00px;height:78.50px;background:#bccff6;"></div>
<div class="t" style="right:949.60px;top:159.20px;font-size:14.7px;color:#3c4254;letter-spacing:0.62px;">3,058 ms</div>
<div style="left:800.70px;top:162.00px;width:1.00px;height:78.50px;background:#bccff6;"></div>
<div class="t" style="right:803.20px;top:159.20px;font-size:14.7px;color:#3c4254;letter-spacing:0.62px;">4,058 ms</div>
<div style="left:947.10px;top:162.00px;width:1.00px;height:78.50px;background:#bccff6;"></div>
<div class="t" style="right:656.80px;top:159.20px;font-size:14.7px;color:#3c4254;letter-spacing:0.62px;">5,058 ms</div>
<div style="left:1093.50px;top:162.00px;width:1.00px;height:78.50px;background:#bccff6;"></div>
<div class="t" style="right:510.40px;top:159.20px;font-size:14.7px;color:#3c4254;letter-spacing:0.62px;">6,058 ms</div>
<div style="left:1239.90px;top:162.00px;width:1.00px;height:78.50px;background:#bccff6;"></div>
<div class="t" style="right:364.00px;top:159.20px;font-size:14.7px;color:#3c4254;letter-spacing:0.62px;">7,058 ms</div>
<div style="left:1386.30px;top:162.00px;width:1.00px;height:78.50px;background:#bccff6;"></div>
<div class="t" style="right:217.60px;top:159.20px;font-size:14.7px;color:#3c4254;letter-spacing:0.62px;">8,058 ms</div>
<div class="t" style="right:71.50px;top:159.20px;font-size:14.7px;color:#3c4254;letter-spacing:0.62px;">9,058 ms</div>
<div class="t" style="right:75px;top:184.4px;font-size:15.6px;font-weight:bold;color:#969cb2;letter-spacing:0.5px;">CPU</div>
<div class="t" style="right:75px;top:217.4px;font-size:15.6px;font-weight:bold;color:#969cb2;letter-spacing:0.5px;">NET</div>
<div style="left:207.30px;top:162.50px;width:1.30px;height:124.50px;background:#444959;"></div>
<div style="left:312.20px;top:189.00px;width:2.20px;height:98.00px;background:#a4c2f6;"></div>
<div style="left:326.50px;top:189.00px;width:2.20px;height:98.00px;background:#a4c2f6;"></div>
<div style="left:308.20px;top:163.00px;width:12.00px;height:28.20px;background:#d5e3fb;border:1.2px solid #a4c2f6;border-radius:4px;"><span style="position:absolute;left:1.9px;top:8.5px;width:1.4px;height:11.5px;background:#4f82d2"></span><span style="position:absolute;left:6.3px;top:8.5px;width:1.4px;height:11.5px;background:#4f82d2"></span></div>
<div style="left:319.20px;top:163.00px;width:13.40px;height:28.20px;background:#d5e3fb;border:1.2px solid #a4c2f6;border-radius:4px;"><span style="position:absolute;left:2.6px;top:8.5px;width:1.4px;height:11.5px;background:#1b4d9a"></span><span style="position:absolute;left:7.0px;top:8.5px;width:1.4px;height:11.5px;background:#1b4d9a"></span></div>
<div style="left:68.00px;top:287.00px;width:1464.00px;height:671.00px;background:#fdfbff;"></div>
<div style="left:68.00px;top:286.50px;width:1446.30px;height:26.50px;background:transparent;overflow:hidden;"><div class="t" style="right:1398.00px;top:-1.50px;font-size:16.5px;color:#1f1f1f;letter-spacing:0.7px;">748 ms</div><div class="t" style="right:1294.25px;top:-1.50px;font-size:16.5px;color:#1f1f1f;letter-spacing:0.7px;">753 ms</div><div class="t" style="right:1190.50px;top:-1.50px;font-size:16.5px;color:#1f1f1f;letter-spacing:0.7px;">758 ms</div><div class="t" style="right:1086.75px;top:-1.50px;font-size:16.5px;color:#1f1f1f;letter-spacing:0.7px;">763 ms</div><div class="t" style="right:983.00px;top:-1.50px;font-size:16.5px;color:#1f1f1f;letter-spacing:0.7px;">768 ms</div><div class="t" style="right:879.25px;top:-1.50px;font-size:16.5px;color:#1f1f1f;letter-spacing:0.7px;">773 ms</div><div class="t" style="right:775.50px;top:-1.50px;font-size:16.5px;color:#1f1f1f;letter-spacing:0.7px;">778 ms</div><div class="t" style="right:671.75px;top:-1.50px;font-size:16.5px;color:#1f1f1f;letter-spacing:0.7px;">783 ms</div><div class="t" style="right:568.00px;top:-1.50px;font-size:16.5px;color:#1f1f1f;letter-spacing:0.7px;">788 ms</div><div class="t" style="right:464.25px;top:-1.50px;font-size:16.5px;color:#1f1f1f;letter-spacing:0.7px;">793 ms</div><div class="t" style="right:360.50px;top:-1.50px;font-size:16.5px;color:#1f1f1f;letter-spacing:0.7px;">798 ms</div><div class="t" style="right:256.75px;top:-1.50px;font-size:16.5px;color:#1f1f1f;letter-spacing:0.7px;">803 ms</div><div class="t" style="right:153.00px;top:-1.50px;font-size:16.5px;color:#1f1f1f;letter-spacing:0.7px;">808 ms</div><div class="t" style="right:49.25px;top:-1.50px;font-size:16.5px;color:#1f1f1f;letter-spacing:0.7px;">813 ms</div><div class="t" style="right:-54.50px;top:-1.50px;font-size:16.5px;color:#1f1f1f;letter-spacing:0.7px;">818 ms</div></div>
<div style="left:238.50px;top:351.90px;width:1008.50px;height:1.20px;background:#c9c9cf;"></div>
<div style="left:1246.40px;top:348.00px;width:1.20px;height:9.00px;background:#b9b9c0;"></div>
<div style="left:146.00px;top:403.20px;width:1093.00px;height:1.20px;background:#c9c9cf;"></div>
<div style="left:1238.40px;top:399.30px;width:1.20px;height:9.00px;background:#b9b9c0;"></div>
<div style="left:516.50px;top:429.20px;width:997.80px;height:1.30px;background:#c6c6cb;"></div>
<div style="left:516.00px;top:425.00px;width:1.20px;height:8.20px;background:#b9b9c0;"></div>
<div style="left:68.00px;top:340.00px;width:170.50px;height:23.40px;background:#049fc5;overflow:hidden;"></div>
<div class="t" style="left:75.00px;top:336.70px;font-size:16.5px;color:#3a2e33;letter-spacing:0.447px;">UcC73FwrK3iLTe...</div>
<div style="left:68.00px;top:365.90px;width:1446.30px;height:23.40px;background:#049fc5;"></div>
<div class="t" style="left:75.00px;top:362.60px;font-size:16.5px;color:#3a2e33;letter-spacing:0.654px;">kJF1BvYX7BgnkSrUwT8OhrdQw4oELdPleeIl9v6oDMzByHX9rA6RzaxHMPdY43zj-jCxv3fzvRNU22ZXGJpEpjC_1v-p_4MrlmHClJIZrDCvHOejbd5zrDAt.woff2 (fonts.gstatic.com)</div>
<div style="left:68.00px;top:391.80px;width:78.00px;height:23.40px;background:#049fc5;"></div>
<div class="t" style="left:75.00px;top:388.50px;font-size:16.5px;color:#3a2e33;letter-spacing:-0.073px;">NGSw...</div>
<svg style="left:77.7px;top:321.0px" width="12" height="11" viewBox="0 0 12 11"><path d="M0.2 0.4H11.8L6 10.8Z" fill="#85858c"/></svg>
<div class="t" style="left:94.50px;top:311.00px;font-size:16.5px;color:#1f1f1f;letter-spacing:0.784px;">Network</div>
<div style="left:68.00px;top:433.20px;width:1464.00px;height:12.20px;background:#ecedf7;border-top:1px solid #d9e2f7;border-bottom:1px solid #d9e2f7;"></div>
<div style="left:791.75px;top:438.00px;width:2.90px;height:2.90px;background:#1f1f22;border-radius:50%;"></div>
<div style="left:798.25px;top:438.00px;width:2.90px;height:2.90px;background:#1f1f22;border-radius:50%;"></div>
<div style="left:804.75px;top:438.00px;width:2.90px;height:2.90px;background:#1f1f22;border-radius:50%;"></div>
<div style="left:68.00px;top:445.40px;width:1446.30px;height:25.90px;background:#d7eed1;"></div>
<div style="left:68.00px;top:477.70px;width:1446.30px;height:24.90px;background:#cf8efc;"></div>
<div style="left:68.00px;top:505.60px;width:1446.30px;height:1.00px;background:#eeecf5;"></div>
<div style="left:68.00px;top:537.60px;width:1446.30px;height:1.00px;background:#eeecf5;"></div>
<div style="left:68.00px;top:569.60px;width:1446.30px;height:1.00px;background:#eeecf5;"></div>
<div style="left:68.00px;top:601.60px;width:1446.30px;height:1.00px;background:#eeecf5;"></div>
<div style="left:77.00px;top:448.60px;width:80.50px;height:19.80px;background:rgba(253,251,255,.78);"></div>
<div style="left:77.00px;top:480.40px;width:110.50px;height:19.80px;background:rgba(253,251,255,.78);"></div>
<svg style="left:79px;top:452px" width="11" height="12" viewBox="0 0 11 12"><path d="M0.4 0.2V11.8L10.8 6Z" fill="#85858c"/></svg>
<div class="t" style="left:94.50px;top:443.00px;font-size:16.5px;color:#2b2b2f;letter-spacing:0.346px;">Frames</div>
<div class="t" style="left:759.50px;top:444.60px;font-size:16.5px;color:#2b2b2f;letter-spacing:0.758px;">83.6 ms</div>
<svg style="left:79px;top:484px" width="11" height="12" viewBox="0 0 11 12"><path d="M0.4 0.2V11.8L10.8 6Z" fill="#85858c"/></svg>
<div class="t" style="left:94.50px;top:475.00px;font-size:16.5px;color:#2b2b2f;letter-spacing:0.638px;">Animations</div>
<svg style="left:79px;top:516px" width="11" height="12" viewBox="0 0 11 12"><path d="M0.4 0.2V11.8L10.8 6Z" fill="#85858c"/></svg>
<div class="t" style="left:94.50px;top:507.00px;font-size:16.5px;color:#2b2b2f;letter-spacing:0.693px;">Timings</div>
<div style="left:174.70px;top:510.00px;width:1.20px;height:23.50px;background:#f2d58a;"></div>
<div style="left:406.20px;top:510.00px;width:1.20px;height:23.50px;background:#f2d58a;"></div>
<div style="left:409.20px;top:510.00px;width:1.20px;height:23.50px;background:#f2d58a;"></div>
<div style="left:537.40px;top:510.00px;width:1.20px;height:23.50px;background:#f2d58a;"></div>
<div style="left:750.40px;top:510.00px;width:1.20px;height:23.50px;background:#f2d58a;"></div>
<div style="left:811.90px;top:510.00px;width:1.20px;height:23.50px;background:#f2d58a;"></div>
<div style="left:932.40px;top:510.00px;width:1.20px;height:23.50px;background:#f2d58a;"></div>
<div style="left:1017.40px;top:510.00px;width:1.20px;height:23.50px;background:#f2d58a;"></div>
<svg style="left:77.7px;top:549.0px" width="12" height="11" viewBox="0 0 12 11"><path d="M0.2 0.4H11.8L6 10.8Z" fill="#85858c"/></svg>
<div class="t" style="left:94.50px;top:539.00px;font-size:16.5px;color:#2b2b2f;letter-spacing:0.725px;">Interactions</div>
<div style="left:68.00px;top:584.50px;width:9.30px;height:3.70px;background:#e9cafc;"></div>
<div style="left:201.30px;top:584.50px;width:1313.00px;height:3.70px;background:#e9cafc;"></div>
<div class="t" style="left:94.50px;top:571.00px;font-size:16.5px;color:#2b2b2f;letter-spacing:0.720px;">Layout shifts</div>
<svg style="left:1491px;top:580.2px" width="12" height="12" viewBox="0 0 12 12"><path d="M6 0.8L11.2 6L6 11.2L0.8 6Z" fill="#c987f6"/></svg>
<svg style="left:77.7px;top:613.0px" width="12" height="11" viewBox="0 0 12 11"><path d="M0.2 0.4H11.8L6 10.8Z" fill="#85858c"/></svg>
<div class="t" style="left:94.50px;top:603.00px;font-size:16.5px;color:#2b2b2f;letter-spacing:0.587px;">Main — https://angular.dev/overview</div>
<div style="left:68.00px;top:603.00px;width:2.40px;height:355.00px;background:#2a70dc;"></div>
<div style="left:68.00px;top:603.00px;width:15.20px;height:2.60px;background:#2a70dc;"></div>
<div style="left:1516.80px;top:293.00px;width:12.20px;height:86.00px;background:#c2c2c4;border-radius:6px;"></div>
<div style="left:1516.80px;top:450.50px;width:12.20px;height:35.00px;background:#c2c2c4;border-radius:6px;"></div>
<div style="left:0;top:0;width:1600px;height:958px;overflow:hidden;"><div class="f" style="left:71.00px;top:631.40px;width:65.00px;height:24.3px;background:#c5c6cf;padding-left:5.80px;font-size:16.5px;letter-spacing:0.58px;">Task</div><div class="f" style="left:137.25px;top:631.40px;width:1095.00px;height:24.3px;background:#c5c6cf;padding-left:7.70px;font-size:16.5px;letter-spacing:0.58px;">Task</div><div style="left:1235.00px;top:631.40px;width:7.50px;height:24.3px;background:#c5c6cf;"></div><div style="left:1244.25px;top:631.40px;width:5.75px;height:24.3px;background:#c5c6cf;"></div><div class="f" style="left:1251.25px;top:631.40px;width:263.00px;height:24.3px;background:#c5c6cf;padding-left:8.75px;font-size:16.5px;letter-spacing:0.58px;">Task</div><div style="left:1173.5px;top:631.4px;width:58.75px;height:24.3px;background:repeating-linear-gradient(135deg,rgba(232,78,78,.8) 0 1.45px,rgba(240,200,205,.3) 1.45px 3.5px);"></div><svg style="left:1221.6px;top:631.4px" width="11" height="11" viewBox="0 0 11 11"><path d="M0 0H10.7V10.7Z" fill="#f4000a"/></svg><div class="f" style="left:137.25px;top:657.34px;width:435.75px;height:24.3px;background:#f9cc15;padding-left:7.70px;font-size:16.5px;letter-spacing:0.58px;">Evaluate module</div><div class="f" style="left:574.50px;top:657.34px;width:598.00px;height:24.3px;background:#f9cc15;padding-left:7.70px;font-size:16.5px;letter-spacing:0.58px;">Run microtasks</div><div style="left:1174.75px;top:657.34px;width:15.75px;height:24.3px;background:#f9cc15;"></div><div style="left:1193.75px;top:657.34px;width:23.00px;height:24.3px;background:#dbe8c6;"></div><div style="left:1218.00px;top:657.34px;width:6.25px;height:24.3px;background:#cf8efc;"></div><div style="left:1236.00px;top:657.34px;width:2.00px;height:24.3px;background:#8eb0ef;"></div><div style="left:1239.30px;top:657.34px;width:1.30px;height:24.3px;background:#b9cdf5;"></div><div style="left:1245.00px;top:657.34px;width:3.60px;height:24.3px;background:#b9d0f7;"></div><div class="f" style="left:1253.00px;top:657.34px;width:202.50px;height:24.3px;background:#cf8efc;padding-left:18.20px;font-size:16.5px;letter-spacing:0.58px;">Layout</div><div class="f" style="left:1457.00px;top:657.34px;width:38.75px;height:24.3px;background:#cf8efc;padding-left:8.20px;font-size:16.5px;letter-spacing:0.58px;">P<span style="letter-spacing:-0.35px">...</span></div><div style="left:1496.40px;top:657.34px;width:1.60px;height:24.3px;background:#cf8efc;"></div><div style="left:1498.00px;top:657.34px;width:1.50px;height:24.3px;background:#fbdc7c;"></div><div style="left:1500.00px;top:657.34px;width:14.25px;height:24.3px;background:#f9cc15;"></div><div style="left:137.25px;top:683.28px;width:2.05px;height:24.3px;background:#fbdc7c;"></div><div class="f" style="left:139.75px;top:683.28px;width:87.75px;height:24.3px;background:#b9e5f6;padding-left:8.75px;font-size:16.5px;letter-spacing:0.58px;">(an<span style="letter-spacing:-0.35px">...</span>us)</div><div style="left:251.00px;top:683.28px;width:0.80px;height:24.3px;background:#d6effa;"></div><div style="left:277.50px;top:683.28px;width:1.80px;height:24.3px;background:#b9e5f6;"></div><div class="f" style="left:289.25px;top:683.28px;width:283.75px;height:24.3px;background:#b9e5f6;padding-left:8.25px;font-size:16.5px;letter-spacing:0.58px;">(anonymous)</div><div style="left:576.00px;top:683.28px;width:5.75px;height:24.3px;background:repeating-linear-gradient(90deg,#f9d458 0 1.3px,#fdeaa8 1.3px 2.3px,#fbdc7c 2.3px 3.4px,#fef3cf 3.4px 4.1px);"></div><div class="f" style="left:582.25px;top:683.28px;width:478.75px;height:24.3px;background:#b9e5f6;padding-left:7.95px;font-size:16.5px;letter-spacing:0.58px;">(anonymous)</div><div class="f" style="left:1062.50px;top:683.28px;width:76.75px;height:24.3px;background:#b9e5f6;padding-left:8.10px;font-size:16.5px;letter-spacing:0.58px;">(an<span style="letter-spacing:-0.35px">...</span>s)</div><div style="left:1141.25px;top:683.28px;width:31.25px;height:24.3px;background:#b9e5f6;"></div><div style="left:1174.75px;top:683.28px;width:15.75px;height:24.3px;background:#f9cc15;"></div><div style="left:1193.75px;top:683.28px;width:23.00px;height:24.3px;background:#dbe8c6;"></div><div style="left:1500.00px;top:683.28px;width:14.25px;height:24.3px;background:#f9cc15;"></div><div style="left:139.75px;top:709.22px;width:87.75px;height:24.3px;background:repeating-linear-gradient(90deg,#b9e5f6 0 4.3px,#e4f4fb 4.3px 5.1px,#b9e5f6 5.1px 7.4px,#e9f6fc 7.4px 8.1px);"></div><div style="left:153.00px;top:709.22px;width:1.80px;height:24.3px;background:#fbdc7c;"></div><div style="left:178.00px;top:709.22px;width:3.00px;height:24.3px;background:#fbdc7c;"></div><div style="left:183.80px;top:709.22px;width:4.70px;height:24.3px;background:repeating-linear-gradient(90deg,#f9d458 0 1.3px,#fdeaa8 1.3px 2.3px,#fbdc7c 2.3px 3.4px,#fef3cf 3.4px 4.1px);"></div><div style="left:205.00px;top:709.22px;width:5.00px;height:24.3px;background:repeating-linear-gradient(90deg,#f9d458 0 1.3px,#fdeaa8 1.3px 2.3px,#fbdc7c 2.3px 3.4px,#fef3cf 3.4px 4.1px);"></div><div style="left:221.80px;top:709.22px;width:2.00px;height:24.3px;background:#fbdc7c;"></div><div style="left:225.60px;top:709.22px;width:1.90px;height:24.3px;background:#b9e5f6;"></div><div style="left:298.00px;top:709.22px;width:4.50px;height:24.3px;background:repeating-linear-gradient(90deg,#fbe295 0 1.2px,#fef4d6 1.2px 2.2px,#fcebb5 2.2px 3.2px,#fdfbff 3.2px 4px);"></div><div style="left:305.50px;top:709.22px;width:3.75px;height:24.3px;background:repeating-linear-gradient(90deg,#f9d458 0 1.3px,#fdeaa8 1.3px 2.3px,#fbdc7c 2.3px 3.4px,#fef3cf 3.4px 4.1px);"></div><div style="left:313.00px;top:709.22px;width:5.75px;height:24.3px;background:repeating-linear-gradient(90deg,#f9d458 0 1.3px,#fdeaa8 1.3px 2.3px,#fbdc7c 2.3px 3.4px,#fef3cf 3.4px 4.1px);"></div><div style="left:320.00px;top:709.22px;width:26.00px;height:24.3px;background:#b9e5f6;"></div><div style="left:333.00px;top:709.22px;width:0.80px;height:24.3px;background:#e4f4fb;"></div><div style="left:353.00px;top:709.22px;width:5.75px;height:24.3px;background:repeating-linear-gradient(90deg,#f9d458 0 1.3px,#fdeaa8 1.3px 2.3px,#fbdc7c 2.3px 3.4px,#fef3cf 3.4px 4.1px);"></div><div style="left:364.25px;top:709.22px;width:1.25px;height:24.3px;background:#fbdc7c;"></div><div style="left:365.50px;top:709.22px;width:55.50px;height:24.3px;background:repeating-linear-gradient(90deg,#b9e5f6 0 4.3px,#e4f4fb 4.3px 5.1px,#b9e5f6 5.1px 7.4px,#e9f6fc 7.4px 8.1px);"></div><div style="left:385.00px;top:709.22px;width:1.40px;height:24.3px;background:#fbdc7c;"></div><div class="f" style="left:421.75px;top:709.22px;width:151.25px;height:24.3px;background:#b9e5f6;padding-left:8.25px;font-size:16.5px;letter-spacing:0.58px;">nn$2</div><div style="left:576.00px;top:709.22px;width:3.50px;height:24.3px;background:#d6effa;"></div><div class="f" style="left:582.25px;top:709.22px;width:478.75px;height:24.3px;background:#b9e5f6;padding-left:7.95px;font-size:16.5px;letter-spacing:0.58px;">bootstrap</div><div class="f" style="left:1062.50px;top:709.22px;width:73.50px;height:24.3px;background:#b9e5f6;padding-left:8.10px;font-size:16.5px;letter-spacing:0.58px;">next</div><div style="left:1137.25px;top:709.22px;width:2.00px;height:24.3px;background:#b9e5f6;"></div><div style="left:1141.25px;top:709.22px;width:31.25px;height:24.3px;background:#b9e5f6;"></div><div style="left:1175.00px;top:709.22px;width:1.30px;height:24.3px;background:#fbdc7c;"></div><div style="left:1177.50px;top:709.22px;width:13.00px;height:24.3px;background:#dbe8c6;"></div><div style="left:1193.75px;top:709.22px;width:23.00px;height:24.3px;background:#f9cc15;"></div><div style="left:1501.25px;top:709.22px;width:2.50px;height:24.3px;background:#fbdc7c;"></div><div style="left:1504.50px;top:709.22px;width:9.75px;height:24.3px;background:#b9e5f6;"></div><div style="left:139.75px;top:735.16px;width:10.25px;height:24.3px;background:repeating-linear-gradient(90deg,#f9d458 0 1.3px,#fdeaa8 1.3px 2.3px,#fbdc7c 2.3px 3.4px,#fef3cf 3.4px 4.1px);"></div><div style="left:158.00px;top:735.16px;width:7.50px;height:24.3px;background:repeating-linear-gradient(90deg,#f9d458 0 1.3px,#fdeaa8 1.3px 2.3px,#fbdc7c 2.3px 3.4px,#fef3cf 3.4px 4.1px);"></div><div style="left:166.00px;top:735.16px;width:10.75px;height:24.3px;background:#b9e5f6;"></div><div style="left:181.00px;top:735.16px;width:0.80px;height:24.3px;background:#d6effa;"></div><div style="left:185.50px;top:735.16px;width:0.80px;height:24.3px;background:#d6effa;"></div><div style="left:192.30px;top:735.16px;width:1.30px;height:24.3px;background:#b9e5f6;"></div><div style="left:194.75px;top:735.16px;width:1.25px;height:24.3px;background:#fbdc7c;"></div><div style="left:196.50px;top:735.16px;width:6.50px;height:24.3px;background:#b9e5f6;"></div><div style="left:210.00px;top:735.16px;width:3.75px;height:24.3px;background:#b9e5f6;"></div><div style="left:307.25px;top:735.16px;width:3.75px;height:24.3px;background:#d6effa;"></div><div style="left:320.00px;top:735.16px;width:26.00px;height:24.3px;background:#b9e5f6;"></div><div style="left:333.00px;top:735.16px;width:0.80px;height:24.3px;background:#e4f4fb;"></div><div style="left:355.50px;top:735.16px;width:1.75px;height:24.3px;background:#d6effa;"></div><div style="left:365.50px;top:735.16px;width:22.50px;height:24.3px;background:repeating-linear-gradient(90deg,#b9e5f6 0 4.3px,#e4f4fb 4.3px 5.1px,#b9e5f6 5.1px 7.4px,#e9f6fc 7.4px 8.1px);"></div><div style="left:388.00px;top:735.16px;width:1.50px;height:24.3px;background:#fbdc7c;"></div><div style="left:390.00px;top:735.16px;width:11.75px;height:24.3px;background:repeating-linear-gradient(90deg,#b9e5f6 0 4.3px,#e4f4fb 4.3px 5.1px,#b9e5f6 5.1px 7.4px,#e9f6fc 7.4px 8.1px);"></div><div style="left:405.00px;top:735.16px;width:8.75px;height:24.3px;background:repeating-linear-gradient(90deg,#f9d458 0 1.3px,#fdeaa8 1.3px 2.3px,#fbdc7c 2.3px 3.4px,#fef3cf 3.4px 4.1px);"></div><div style="left:421.75px;top:735.16px;width:15.00px;height:24.3px;background:repeating-linear-gradient(90deg,#f9d458 0 1.3px,#fdeaa8 1.3px 2.3px,#fbdc7c 2.3px 3.4px,#fef3cf 3.4px 4.1px);"></div><div class="f" style="left:437.25px;top:735.16px;width:135.75px;height:24.3px;background:#b9e5f6;padding-left:8.25px;font-size:16.5px;letter-spacing:0.58px;">aO</div><div style="left:576.00px;top:735.16px;width:3.50px;height:24.3px;background:#d6effa;"></div><div class="f" style="left:582.25px;top:735.16px;width:478.75px;height:24.3px;background:#b9e5f6;padding-left:7.95px;font-size:16.5px;letter-spacing:0.58px;">bootstrapImpl</div><div class="f" style="left:1062.50px;top:735.16px;width:73.50px;height:24.3px;background:#b9e5f6;padding-left:8.10px;font-size:16.5px;letter-spacing:0.58px;">Ei<span style="letter-spacing:-0.35px">...</span>.ext</div><div style="left:1137.25px;top:735.16px;width:2.00px;height:24.3px;background:#b9e5f6;"></div><div style="left:1141.25px;top:735.16px;width:31.25px;height:24.3px;background:#b9e5f6;"></div><div style="left:1177.50px;top:735.16px;width:13.00px;height:24.3px;background:#dbe8c6;"></div><div style="left:1193.75px;top:735.16px;width:23.00px;height:24.3px;background:#cf8efc;"></div><div style="left:1502.50px;top:735.16px;width:2.00px;height:24.3px;background:#d6effa;"></div><div style="left:1504.50px;top:735.16px;width:9.75px;height:24.3px;background:#b9e5f6;"></div><div style="left:151.00px;top:761.10px;width:1.50px;height:24.3px;background:#b9e5f6;"></div><div style="left:166.00px;top:761.10px;width:10.75px;height:24.3px;background:#b9e5f6;"></div><div style="left:171.00px;top:761.10px;width:0.70px;height:24.3px;background:#e4f4fb;"></div><div style="left:181.00px;top:761.10px;width:0.80px;height:24.3px;background:#d6effa;"></div><div style="left:185.50px;top:761.10px;width:0.80px;height:24.3px;background:#d6effa;"></div><div style="left:196.50px;top:761.10px;width:6.50px;height:24.3px;background:#b9e5f6;"></div><div style="left:199.60px;top:761.10px;width:0.70px;height:24.3px;background:#e4f4fb;"></div><div style="left:210.00px;top:761.10px;width:2.50px;height:24.3px;background:#b9e5f6;"></div><div style="left:214.25px;top:761.10px;width:1.25px;height:24.3px;background:#fbdc7c;"></div><div style="left:309.25px;top:761.10px;width:1.75px;height:24.3px;background:#b9e5f6;"></div><div style="left:320.00px;top:761.10px;width:1.25px;height:24.3px;background:#b9e5f6;"></div><div style="left:329.25px;top:761.10px;width:9.25px;height:24.3px;background:#b9e5f6;"></div><div style="left:332.50px;top:761.10px;width:0.70px;height:24.3px;background:#e4f4fb;"></div><div style="left:340.50px;top:761.10px;width:5.50px;height:24.3px;background:#b9e5f6;"></div><div style="left:355.50px;top:761.10px;width:1.75px;height:24.3px;background:#d6effa;"></div><div style="left:365.50px;top:761.10px;width:2.00px;height:24.3px;background:#b9e5f6;"></div><div style="left:373.00px;top:761.10px;width:3.00px;height:24.3px;background:repeating-linear-gradient(90deg,#f9d458 0 1.3px,#fdeaa8 1.3px 2.3px,#fbdc7c 2.3px 3.4px,#fef3cf 3.4px 4.1px);"></div><div style="left:376.75px;top:761.10px;width:5.00px;height:24.3px;background:#b9e5f6;"></div><div style="left:382.25px;top:761.10px;width:2.75px;height:24.3px;background:repeating-linear-gradient(90deg,#f9d458 0 1.3px,#fdeaa8 1.3px 2.3px,#fbdc7c 2.3px 3.4px,#fef3cf 3.4px 4.1px);"></div><div style="left:390.00px;top:761.10px;width:1.25px;height:24.3px;background:#fbdc7c;"></div><div style="left:393.00px;top:761.10px;width:5.00px;height:24.3px;background:#b9e5f6;"></div><div style="left:417.50px;top:761.10px;width:3.50px;height:24.3px;background:#b9e5f6;"></div><div style="left:425.00px;top:761.10px;width:9.90px;height:24.3px;background:repeating-linear-gradient(90deg,#b9e5f6 0 4.3px,#e4f4fb 4.3px 5.1px,#b9e5f6 5.1px 7.4px,#e9f6fc 7.4px 8.1px);"></div><div style="left:435.70px;top:761.10px;width:2.60px;height:24.3px;background:#b9e5f6;"></div><div style="left:439.10px;top:761.10px;width:11.50px;height:24.3px;background:#b9e5f6;"></div><div class="f" style="left:451.70px;top:761.10px;width:121.30px;height:24.3px;background:#b9e5f6;padding-left:8.80px;font-size:16.5px;letter-spacing:0.58px;">ND</div><div style="left:576.00px;top:761.10px;width:3.50px;height:24.3px;background:#d6effa;"></div><div class="f" style="left:582.25px;top:761.10px;width:326.50px;height:24.3px;background:#b9e5f6;padding-left:7.95px;font-size:16.5px;letter-spacing:0.58px;">create</div><div class="f" style="left:909.75px;top:761.10px;width:151.25px;height:24.3px;background:#b9e5f6;padding-left:8.25px;font-size:16.5px;letter-spacing:0.58px;">_loadComponent</div><div class="f" style="left:1062.50px;top:761.10px;width:73.50px;height:24.3px;background:#b9e5f6;padding-left:8.10px;font-size:16.5px;letter-spacing:0.58px;">S$<span style="letter-spacing:-0.35px">...</span>.o</div><div style="left:1137.25px;top:761.10px;width:2.00px;height:24.3px;background:#b9e5f6;"></div><div style="left:1140.50px;top:761.10px;width:5.50px;height:24.3px;background:#b9e5f6;"></div><div style="left:1147.50px;top:761.10px;width:6.75px;height:24.3px;background:#b9e5f6;"></div><div style="left:1150.50px;top:761.10px;width:0.70px;height:24.3px;background:#e4f4fb;"></div><div style="left:1155.50px;top:761.10px;width:3.75px;height:24.3px;background:#b9e5f6;"></div><div style="left:1160.50px;top:761.10px;width:12.00px;height:24.3px;background:#b9e5f6;"></div><div style="left:1178.20px;top:761.10px;width:1.00px;height:24.3px;background:#fbdc7c;"></div><div style="left:1179.50px;top:761.10px;width:11.00px;height:24.3px;background:#dbe8c6;"></div><div style="left:1502.50px;top:761.10px;width:2.00px;height:24.3px;background:#d6effa;"></div><div style="left:1504.50px;top:761.10px;width:9.75px;height:24.3px;background:#b9e5f6;"></div><div style="left:151.00px;top:787.04px;width:2.00px;height:24.3px;background:#f9cc15;"></div><div style="left:166.00px;top:787.04px;width:10.75px;height:24.3px;background:#b9e5f6;"></div><div style="left:171.00px;top:787.04px;width:0.70px;height:24.3px;background:#e4f4fb;"></div><div style="left:181.00px;top:787.04px;width:0.80px;height:24.3px;background:#d6effa;"></div><div style="left:185.50px;top:787.04px;width:0.80px;height:24.3px;background:#d6effa;"></div><div style="left:196.50px;top:787.04px;width:6.50px;height:24.3px;background:#b9e5f6;"></div><div style="left:199.60px;top:787.04px;width:0.70px;height:24.3px;background:#e4f4fb;"></div><div style="left:210.50px;top:787.04px;width:2.00px;height:24.3px;background:#b9e5f6;"></div><div style="left:309.25px;top:787.04px;width:1.75px;height:24.3px;background:#b9e5f6;"></div><div style="left:320.00px;top:787.04px;width:1.25px;height:24.3px;background:#b9e5f6;"></div><div style="left:329.25px;top:787.04px;width:9.25px;height:24.3px;background:#b9e5f6;"></div><div style="left:332.50px;top:787.04px;width:0.70px;height:24.3px;background:#e4f4fb;"></div><div style="left:340.50px;top:787.04px;width:5.50px;height:24.3px;background:#b9e5f6;"></div><div style="left:355.50px;top:787.04px;width:1.75px;height:24.3px;background:#d6effa;"></div><div style="left:376.75px;top:787.04px;width:1.75px;height:24.3px;background:#b9e5f6;"></div><div style="left:394.25px;top:787.04px;width:2.50px;height:24.3px;background:#fbdc7c;"></div><div style="left:417.50px;top:787.04px;width:3.50px;height:24.3px;background:#b9e5f6;"></div><div style="left:425.00px;top:787.04px;width:9.90px;height:24.3px;background:repeating-linear-gradient(90deg,#b9e5f6 0 4.3px,#e4f4fb 4.3px 5.1px,#b9e5f6 5.1px 7.4px,#e9f6fc 7.4px 8.1px);"></div><div style="left:435.70px;top:787.04px;width:2.60px;height:24.3px;background:#b9e5f6;"></div><div style="left:439.10px;top:787.04px;width:11.50px;height:24.3px;background:#b9e5f6;"></div><div class="f" style="left:451.70px;top:787.04px;width:121.30px;height:24.3px;background:#b9e5f6;padding-left:8.80px;font-size:16.5px;letter-spacing:0.58px;">run</div><div style="left:573.50px;top:787.04px;width:1.30px;height:24.3px;background:#fbdc7c;"></div><div style="left:576.00px;top:787.04px;width:3.50px;height:24.3px;background:#d6effa;"></div><div class="f" style="left:582.25px;top:787.04px;width:88.75px;height:24.3px;background:#b9e5f6;padding-left:7.95px;font-size:16.5px;letter-spacing:0.58px;">oE</div><div class="f" style="left:672.25px;top:787.04px;width:41.50px;height:24.3px;background:#b9e5f6;padding-left:7.75px;font-size:16.5px;letter-spacing:0.58px;">Ov</div><div style="left:715.00px;top:787.04px;width:27.50px;height:24.3px;background:#b9e5f6;"></div><div class="f" style="left:743.75px;top:787.04px;width:140.50px;height:24.3px;background:#b9e5f6;padding-left:8.00px;font-size:16.5px;letter-spacing:0.58px;">hc$1</div><div style="left:886.75px;top:787.04px;width:22.50px;height:24.3px;background:repeating-linear-gradient(90deg,#f9d458 0 1.3px,#fdeaa8 1.3px 2.3px,#fbdc7c 2.3px 3.4px,#fef3cf 3.4px 4.1px);"></div><div class="f" style="left:909.75px;top:787.04px;width:107.00px;height:24.3px;background:#b9e5f6;padding-left:8.25px;font-size:16.5px;letter-spacing:0.58px;">tick</div><div class="f" style="left:1019.75px;top:787.04px;width:41.25px;height:24.3px;background:#b9e5f6;padding-left:8.25px;font-size:16.5px;letter-spacing:0.58px;">(<span style="letter-spacing:-0.35px">...</span>)</div><div class="f" style="left:1062.50px;top:787.04px;width:73.50px;height:24.3px;background:#b9e5f6;padding-left:8.10px;font-size:16.5px;letter-spacing:0.58px;">next</div><div style="left:1137.25px;top:787.04px;width:2.00px;height:24.3px;background:#b9e5f6;"></div><div style="left:1141.25px;top:787.04px;width:5.50px;height:24.3px;background:repeating-linear-gradient(90deg,#fbe295 0 1.2px,#fef4d6 1.2px 2.2px,#fcebb5 2.2px 3.2px,#fdfbff 3.2px 4px);"></div><div style="left:1147.50px;top:787.04px;width:25.00px;height:24.3px;background:#b9e5f6;"></div><div style="left:1178.75px;top:787.04px;width:1.75px;height:24.3px;background:#dbe8c6;"></div><div style="left:1181.75px;top:787.04px;width:5.75px;height:24.3px;background:#f9cc15;"></div><div style="left:1502.50px;top:787.04px;width:2.00px;height:24.3px;background:#d6effa;"></div><div style="left:1504.50px;top:787.04px;width:9.75px;height:24.3px;background:#b9e5f6;"></div><div style="left:166.00px;top:812.98px;width:10.75px;height:24.3px;background:#b9e5f6;"></div><div style="left:171.00px;top:812.98px;width:0.70px;height:24.3px;background:#e4f4fb;"></div><div style="left:181.00px;top:812.98px;width:0.80px;height:24.3px;background:#d6effa;"></div><div style="left:185.50px;top:812.98px;width:0.80px;height:24.3px;background:#d6effa;"></div><div style="left:196.50px;top:812.98px;width:6.50px;height:24.3px;background:#b9e5f6;"></div><div style="left:199.60px;top:812.98px;width:0.70px;height:24.3px;background:#e4f4fb;"></div><div style="left:210.50px;top:812.98px;width:2.00px;height:24.3px;background:#b9e5f6;"></div><div style="left:320.00px;top:812.98px;width:1.25px;height:24.3px;background:#b9e5f6;"></div><div style="left:329.25px;top:812.98px;width:9.25px;height:24.3px;background:#b9e5f6;"></div><div style="left:332.50px;top:812.98px;width:0.70px;height:24.3px;background:#e4f4fb;"></div><div style="left:340.50px;top:812.98px;width:5.50px;height:24.3px;background:#b9e5f6;"></div><div style="left:355.50px;top:812.98px;width:1.75px;height:24.3px;background:#d6effa;"></div><div style="left:417.50px;top:812.98px;width:3.50px;height:24.3px;background:#b9e5f6;"></div><div style="left:425.00px;top:812.98px;width:9.90px;height:24.3px;background:repeating-linear-gradient(90deg,#b9e5f6 0 4.3px,#e4f4fb 4.3px 5.1px,#b9e5f6 5.1px 7.4px,#e9f6fc 7.4px 8.1px);"></div><div style="left:435.70px;top:812.98px;width:2.60px;height:24.3px;background:#b9e5f6;"></div><div style="left:439.10px;top:812.98px;width:4.80px;height:24.3px;background:#b9e5f6;"></div><div style="left:444.25px;top:812.98px;width:7.65px;height:24.3px;background:repeating-linear-gradient(90deg,#f9d458 0 1.3px,#fdeaa8 1.3px 2.3px,#fbdc7c 2.3px 3.4px,#fef3cf 3.4px 4.1px);"></div><div class="f" style="left:451.70px;top:812.98px;width:121.30px;height:24.3px;background:#b9e5f6;padding-left:8.80px;font-size:16.5px;letter-spacing:0.58px;">(anonymous)</div><div style="left:576.00px;top:812.98px;width:3.50px;height:24.3px;background:#d6effa;"></div><div class="f" style="left:582.25px;top:812.98px;width:88.75px;height:24.3px;background:#b9e5f6;padding-left:7.95px;font-size:16.5px;letter-spacing:0.58px;">K$5<span style="letter-spacing:-0.35px">...</span>.tor</div><div class="f" style="left:672.25px;top:812.98px;width:41.50px;height:24.3px;background:#b9e5f6;padding-left:7.75px;font-size:16.5px;letter-spacing:0.58px;">Av</div><div style="left:715.00px;top:812.98px;width:27.50px;height:24.3px;background:#b9e5f6;"></div><div class="f" style="left:743.75px;top:812.98px;width:140.50px;height:24.3px;background:#b9e5f6;padding-left:8.00px;font-size:16.5px;letter-spacing:0.58px;">Zv</div><div style="left:888.00px;top:812.98px;width:20.50px;height:24.3px;background:repeating-linear-gradient(90deg,#d3edf9 0 1.6px,#fdfbff 1.6px 3.3px,#c6e9f7 3.3px 4.6px,#fdfbff 4.6px 6.1px);"></div><div class="f" style="left:909.75px;top:812.98px;width:107.00px;height:24.3px;background:#b9e5f6;padding-left:8.25px;font-size:16.5px;letter-spacing:0.58px;">_tick</div><div style="left:1019.75px;top:812.98px;width:24.50px;height:24.3px;background:#b9e5f6;"></div><div style="left:1046.00px;top:812.98px;width:15.00px;height:24.3px;background:#b9e5f6;"></div><div class="f" style="left:1062.50px;top:812.98px;width:73.50px;height:24.3px;background:#b9e5f6;padding-left:8.10px;font-size:16.5px;letter-spacing:0.58px;">Ei<span style="letter-spacing:-0.35px">...</span>.ext</div><div style="left:1137.25px;top:812.98px;width:3.25px;height:24.3px;background:#b9e5f6;"></div><div style="left:1141.30px;top:812.98px;width:1.30px;height:24.3px;background:#d6effa;"></div><div style="left:1147.50px;top:812.98px;width:6.75px;height:24.3px;background:#b9e5f6;"></div><div style="left:1155.00px;top:812.98px;width:4.25px;height:24.3px;background:repeating-linear-gradient(90deg,#fbe295 0 1.2px,#fef4d6 1.2px 2.2px,#fcebb5 2.2px 3.2px,#fdfbff 3.2px 4px);"></div><div style="left:1160.50px;top:812.98px;width:12.00px;height:24.3px;background:#b9e5f6;"></div><div style="left:1179.25px;top:812.98px;width:1.25px;height:24.3px;background:#fbdc7c;"></div><div style="left:1504.50px;top:812.98px;width:9.75px;height:24.3px;background:#b9e5f6;"></div><div style="left:166.00px;top:838.92px;width:10.75px;height:24.3px;background:#b9e5f6;"></div><div style="left:171.00px;top:838.92px;width:0.70px;height:24.3px;background:#e4f4fb;"></div><div style="left:181.00px;top:838.92px;width:2.50px;height:24.3px;background:#fbdc7c;"></div><div style="left:185.50px;top:838.92px;width:0.80px;height:24.3px;background:#d6effa;"></div><div style="left:197.25px;top:838.92px;width:1.25px;height:24.3px;background:#fbdc7c;"></div><div style="left:199.00px;top:838.92px;width:4.00px;height:24.3px;background:#b9e5f6;"></div><div style="left:210.50px;top:838.92px;width:2.00px;height:24.3px;background:#b9e5f6;"></div><div style="left:320.00px;top:838.92px;width:1.25px;height:24.3px;background:#b9e5f6;"></div><div style="left:329.25px;top:838.92px;width:9.25px;height:24.3px;background:#b9e5f6;"></div><div style="left:332.50px;top:838.92px;width:0.70px;height:24.3px;background:#e4f4fb;"></div><div style="left:340.50px;top:838.92px;width:5.50px;height:24.3px;background:#b9e5f6;"></div><div style="left:355.50px;top:838.92px;width:1.75px;height:24.3px;background:#d6effa;"></div><div style="left:417.50px;top:838.92px;width:3.50px;height:24.3px;background:#b9e5f6;"></div><div style="left:425.00px;top:838.92px;width:9.90px;height:24.3px;background:repeating-linear-gradient(90deg,#b9e5f6 0 4.3px,#e4f4fb 4.3px 5.1px,#b9e5f6 5.1px 7.4px,#e9f6fc 7.4px 8.1px);"></div><div style="left:436.90px;top:838.92px;width:3.10px;height:24.3px;background:#fbdc7c;"></div><div style="left:440.85px;top:838.92px;width:3.05px;height:24.3px;background:#b9e5f6;"></div><div style="left:446.00px;top:838.92px;width:0.80px;height:24.3px;background:#d6effa;"></div><div class="f" style="left:451.70px;top:838.92px;width:121.30px;height:24.3px;background:#b9e5f6;padding-left:8.80px;font-size:16.5px;letter-spacing:0.58px;">resolv<span style="letter-spacing:-0.35px">...</span>lizers</div><div style="left:576.00px;top:838.92px;width:3.50px;height:24.3px;background:#d6effa;"></div><div class="f" style="left:582.25px;top:838.92px;width:88.75px;height:24.3px;background:#b9e5f6;padding-left:7.95px;font-size:16.5px;letter-spacing:0.58px;">getO<span style="letter-spacing:-0.35px">...</span>tor</div><div class="f" style="left:672.25px;top:838.92px;width:41.50px;height:24.3px;background:#b9e5f6;padding-left:7.75px;font-size:16.5px;letter-spacing:0.58px;">Pv</div><div style="left:715.00px;top:838.92px;width:27.50px;height:24.3px;background:repeating-linear-gradient(90deg,#f9d458 0 1.3px,#fdeaa8 1.3px 2.3px,#fbdc7c 2.3px 3.4px,#fef3cf 3.4px 4.1px);"></div><div class="f" style="left:743.75px;top:838.92px;width:140.50px;height:24.3px;background:#b9e5f6;padding-left:8.00px;font-size:16.5px;letter-spacing:0.58px;">zv</div><div style="left:888.00px;top:838.92px;width:20.50px;height:24.3px;background:repeating-linear-gradient(90deg,#d3edf9 0 1.6px,#fdfbff 1.6px 3.3px,#c6e9f7 3.3px 4.6px,#fdfbff 4.6px 6.1px);"></div><div class="f" style="left:909.75px;top:838.92px;width:107.00px;height:24.3px;background:#b9e5f6;padding-left:8.25px;font-size:16.5px;letter-spacing:0.58px;">tickImpl</div><div style="left:1019.75px;top:838.92px;width:24.50px;height:24.3px;background:#b9e5f6;"></div><div style="left:1046.00px;top:838.92px;width:15.00px;height:24.3px;background:#b9e5f6;"></div><div class="f" style="left:1062.50px;top:838.92px;width:73.50px;height:24.3px;background:#b9e5f6;padding-left:8.10px;font-size:16.5px;letter-spacing:0.58px;">f</div><div style="left:1137.25px;top:838.92px;width:3.25px;height:24.3px;background:#b9e5f6;"></div><div style="left:1141.30px;top:838.92px;width:1.30px;height:24.3px;background:#d6effa;"></div><div style="left:1147.50px;top:838.92px;width:6.75px;height:24.3px;background:#b9e5f6;"></div><div style="left:1160.50px;top:838.92px;width:12.00px;height:24.3px;background:#b9e5f6;"></div><div style="left:1504.50px;top:838.92px;width:9.75px;height:24.3px;background:#b9e5f6;"></div><div style="left:165.50px;top:864.86px;width:9.50px;height:24.3px;background:repeating-linear-gradient(90deg,#f9d458 0 1.3px,#fdeaa8 1.3px 2.3px,#fbdc7c 2.3px 3.4px,#fef3cf 3.4px 4.1px);"></div><div style="left:175.00px;top:864.86px;width:2.00px;height:24.3px;background:#f9cc15;"></div><div style="left:185.50px;top:864.86px;width:0.80px;height:24.3px;background:#d6effa;"></div><div style="left:199.50px;top:864.86px;width:3.50px;height:24.3px;background:#b9e5f6;"></div><div style="left:210.50px;top:864.86px;width:2.00px;height:24.3px;background:#b9e5f6;"></div><div style="left:319.25px;top:864.86px;width:1.75px;height:24.3px;background:#fbdc7c;"></div><div style="left:328.75px;top:864.86px;width:1.25px;height:24.3px;background:#fbdc7c;"></div><div style="left:333.75px;top:864.86px;width:1.75px;height:24.3px;background:#b9e5f6;"></div><div style="left:343.75px;top:864.86px;width:3.00px;height:24.3px;background:#fbdc7c;"></div><div style="left:355.50px;top:864.86px;width:1.75px;height:24.3px;background:#d6effa;"></div><div style="left:425.00px;top:864.86px;width:2.20px;height:24.3px;background:#b9e5f6;"></div><div style="left:427.70px;top:864.86px;width:1.60px;height:24.3px;background:#b9e5f6;"></div><div style="left:429.80px;top:864.86px;width:1.70px;height:24.3px;background:#b9e5f6;"></div><div style="left:432.30px;top:864.86px;width:1.40px;height:24.3px;background:#d6effa;"></div><div style="left:440.85px;top:864.86px;width:3.05px;height:24.3px;background:#b9e5f6;"></div><div style="left:446.00px;top:864.86px;width:0.80px;height:24.3px;background:#d6effa;"></div><div class="f" style="left:451.70px;top:864.86px;width:81.80px;height:24.3px;background:#b9e5f6;padding-left:8.80px;font-size:16.5px;letter-spacing:0.58px;">get</div><div style="left:535.00px;top:864.86px;width:13.00px;height:24.3px;background:#b9e5f6;"></div><div style="left:549.25px;top:864.86px;width:23.75px;height:24.3px;background:#b9e5f6;"></div><div style="left:576.00px;top:864.86px;width:3.50px;height:24.3px;background:#d6effa;"></div><div style="left:582.25px;top:864.86px;width:7.00px;height:24.3px;background:#b9e5f6;"></div><div class="f" style="left:590.50px;top:864.86px;width:80.50px;height:24.3px;background:#b9e5f6;padding-left:8.50px;font-size:16.5px;letter-spacing:0.58px;">Ep</div><div class="f" style="left:672.25px;top:864.86px;width:41.50px;height:24.3px;background:#b9e5f6;padding-left:7.75px;font-size:16.5px;letter-spacing:0.58px;">Fy</div><div style="left:716.00px;top:864.86px;width:26.00px;height:24.3px;background:repeating-linear-gradient(90deg,#dff2fb 0 1.2px,#fdfbff 1.2px 5.2px,#cfecf9 5.2px 6.6px,#fdfbff 6.6px 9.3px);"></div><div class="f" style="left:743.75px;top:864.86px;width:140.50px;height:24.3px;background:#b9e5f6;padding-left:8.00px;font-size:16.5px;letter-spacing:0.58px;">hc$1</div><div style="left:888.00px;top:864.86px;width:20.50px;height:24.3px;background:repeating-linear-gradient(90deg,#d3edf9 0 1.6px,#fdfbff 1.6px 3.3px,#c6e9f7 3.3px 4.6px,#fdfbff 4.6px 6.1px);"></div><div class="f" style="left:909.75px;top:864.86px;width:104.00px;height:24.3px;background:#b9e5f6;padding-left:8.25px;font-size:16.5px;letter-spacing:0.58px;">sync<span style="letter-spacing:-0.35px">...</span>nize</div><div style="left:1015.00px;top:864.86px;width:1.75px;height:24.3px;background:#b9e5f6;"></div><div style="left:1020.50px;top:864.86px;width:1.50px;height:24.3px;background:#fbdc7c;"></div><div style="left:1022.80px;top:864.86px;width:21.50px;height:24.3px;background:#b9e5f6;"></div><div style="left:1046.00px;top:864.86px;width:15.00px;height:24.3px;background:#b9e5f6;"></div><div class="f" style="left:1062.50px;top:864.86px;width:74.25px;height:24.3px;background:#a9d3f3;padding-left:6.10px;font-size:16.5px;letter-spacing:0.58px;border:2px solid #234f9a;line-height:21.6px;color:#3a4a66;">h</div><div style="left:1138.00px;top:864.86px;width:2.40px;height:24.3px;background:#b9e5f6;"></div><div style="left:1141.25px;top:864.86px;width:3.00px;height:24.3px;background:#b9e5f6;"></div><div style="left:1146.00px;top:864.86px;width:4.50px;height:24.3px;background:#d6effa;"></div><div style="left:1151.75px;top:864.86px;width:2.50px;height:24.3px;background:#b9e5f6;"></div><div style="left:1160.50px;top:864.86px;width:12.00px;height:24.3px;background:#b9e5f6;"></div><div style="left:1504.50px;top:864.86px;width:9.75px;height:24.3px;background:#b9e5f6;"></div><div style="left:175.00px;top:890.80px;width:2.00px;height:24.3px;background:#f9cc15;"></div><div style="left:185.50px;top:890.80px;width:0.80px;height:24.3px;background:#d6effa;"></div><div style="left:355.50px;top:890.80px;width:1.75px;height:24.3px;background:#d6effa;"></div><div style="left:425.00px;top:890.80px;width:2.20px;height:24.3px;background:#b9e5f6;"></div><div style="left:427.70px;top:890.80px;width:1.60px;height:24.3px;background:#b9e5f6;"></div><div style="left:429.80px;top:890.80px;width:1.70px;height:24.3px;background:#b9e5f6;"></div><div style="left:432.30px;top:890.80px;width:1.40px;height:24.3px;background:#d6effa;"></div><div style="left:440.85px;top:890.80px;width:3.05px;height:24.3px;background:#b9e5f6;"></div><div style="left:446.00px;top:890.80px;width:0.80px;height:24.3px;background:#d6effa;"></div><div class="f" style="left:451.70px;top:890.80px;width:81.80px;height:24.3px;background:#b9e5f6;padding-left:8.80px;font-size:16.5px;letter-spacing:0.58px;">hydrate</div><div style="left:535.00px;top:890.80px;width:13.00px;height:24.3px;background:#b9e5f6;"></div><div style="left:549.25px;top:890.80px;width:23.75px;height:24.3px;background:#b9e5f6;"></div><div style="left:576.00px;top:890.80px;width:3.50px;height:24.3px;background:#d6effa;"></div><div style="left:582.25px;top:890.80px;width:7.00px;height:24.3px;background:#b9e5f6;"></div><div class="f" style="left:590.50px;top:890.80px;width:80.50px;height:24.3px;background:#b9e5f6;padding-left:8.50px;font-size:16.5px;letter-spacing:0.58px;">_o</div><div style="left:675.00px;top:890.80px;width:17.50px;height:24.3px;background:#f9cc15;"></div><div style="left:694.25px;top:890.80px;width:19.50px;height:24.3px;background:repeating-linear-gradient(90deg,#f9d458 0 1.3px,#fdeaa8 1.3px 2.3px,#fbdc7c 2.3px 3.4px,#fef3cf 3.4px 4.1px);"></div><div style="left:716.00px;top:890.80px;width:26.00px;height:24.3px;background:repeating-linear-gradient(90deg,#dff2fb 0 1.2px,#fdfbff 1.2px 5.2px,#cfecf9 5.2px 6.6px,#fdfbff 6.6px 9.3px);"></div><div class="f" style="left:743.75px;top:890.80px;width:52.25px;height:24.3px;background:#b9e5f6;padding-left:8.00px;font-size:16.5px;letter-spacing:0.58px;">Of</div><div class="f" style="left:797.25px;top:890.80px;width:87.00px;height:24.3px;background:#b9e5f6;padding-left:8.25px;font-size:16.5px;letter-spacing:0.58px;">Zv</div><div style="left:888.00px;top:890.80px;width:20.50px;height:24.3px;background:repeating-linear-gradient(90deg,#d3edf9 0 1.6px,#fdfbff 1.6px 3.3px,#c6e9f7 3.3px 4.6px,#fdfbff 4.6px 6.1px);"></div><div class="f" style="left:909.75px;top:890.80px;width:104.00px;height:24.3px;background:#b9e5f6;padding-left:8.25px;font-size:16.5px;letter-spacing:0.58px;">sync<span style="letter-spacing:-0.35px">...</span>nce</div><div style="left:1015.00px;top:890.80px;width:1.75px;height:24.3px;background:#b9e5f6;"></div><div style="left:1023.00px;top:890.80px;width:12.00px;height:24.3px;background:#b9e5f6;"></div><div style="left:1036.75px;top:890.80px;width:24.25px;height:24.3px;background:#b9e5f6;"></div><div class="f" style="left:1062.50px;top:890.80px;width:73.50px;height:24.3px;background:#b9e5f6;padding-left:8.10px;font-size:16.5px;letter-spacing:0.58px;">su<span style="letter-spacing:-0.35px">...</span>be</div><div style="left:1137.60px;top:890.80px;width:2.80px;height:24.3px;background:#b9e5f6;"></div><div style="left:1141.25px;top:890.80px;width:9.25px;height:24.3px;background:#b9e5f6;"></div><div style="left:1151.00px;top:890.80px;width:2.00px;height:24.3px;background:#fbdc7c;"></div><div style="left:1160.50px;top:890.80px;width:12.00px;height:24.3px;background:#b9e5f6;"></div><div style="left:1504.50px;top:890.80px;width:9.75px;height:24.3px;background:#b9e5f6;"></div><div style="left:185.50px;top:916.74px;width:1.00px;height:24.3px;background:#d6effa;"></div><div style="left:191.50px;top:916.74px;width:1.25px;height:24.3px;background:#fbdc7c;"></div><div style="left:355.50px;top:916.74px;width:1.75px;height:24.3px;background:#d6effa;"></div><div style="left:425.00px;top:916.74px;width:2.20px;height:24.3px;background:#b9e5f6;"></div><div style="left:427.70px;top:916.74px;width:1.60px;height:24.3px;background:#b9e5f6;"></div><div style="left:429.80px;top:916.74px;width:1.70px;height:24.3px;background:#b9e5f6;"></div><div style="left:432.30px;top:916.74px;width:1.40px;height:24.3px;background:#d6effa;"></div><div style="left:440.85px;top:916.74px;width:3.05px;height:24.3px;background:#b9e5f6;"></div><div style="left:446.00px;top:916.74px;width:0.80px;height:24.3px;background:#d6effa;"></div><div class="f" style="left:451.70px;top:916.74px;width:81.80px;height:24.3px;background:#b9e5f6;padding-left:8.80px;font-size:16.5px;letter-spacing:0.58px;">o.f<span style="letter-spacing:-0.35px">...</span>ory</div><div style="left:535.00px;top:916.74px;width:13.00px;height:24.3px;background:#b9e5f6;"></div><div style="left:549.25px;top:916.74px;width:23.75px;height:24.3px;background:#b9e5f6;"></div><div style="left:576.00px;top:916.74px;width:3.50px;height:24.3px;background:#d6effa;"></div><div style="left:582.25px;top:916.74px;width:7.00px;height:24.3px;background:#b9e5f6;"></div><div class="f" style="left:590.50px;top:916.74px;width:80.50px;height:24.3px;background:#b9e5f6;padding-left:8.50px;font-size:16.5px;letter-spacing:0.58px;">res<span style="letter-spacing:-0.35px">...</span>ers</div><div style="left:673.00px;top:916.74px;width:20.50px;height:24.3px;background:repeating-linear-gradient(90deg,#fbe295 0 1.2px,#fef4d6 1.2px 2.2px,#fcebb5 2.2px 3.2px,#fdfbff 3.2px 4px);"></div><div style="left:716.00px;top:916.74px;width:26.00px;height:24.3px;background:repeating-linear-gradient(90deg,#dff2fb 0 1.2px,#fdfbff 1.2px 5.2px,#cfecf9 5.2px 6.6px,#fdfbff 6.6px 9.3px);"></div><div class="f" style="left:743.75px;top:916.74px;width:52.25px;height:24.3px;background:#b9e5f6;padding-left:8.00px;font-size:16.5px;letter-spacing:0.58px;">t<span style="letter-spacing:-0.35px">...</span>e</div><div class="f" style="left:797.25px;top:916.74px;width:87.00px;height:24.3px;background:#b9e5f6;padding-left:8.25px;font-size:16.5px;letter-spacing:0.58px;">zv</div><div style="left:893.00px;top:916.74px;width:15.50px;height:24.3px;background:repeating-linear-gradient(90deg,#d3edf9 0 1.6px,#fdfbff 1.6px 3.3px,#c6e9f7 3.3px 4.6px,#fdfbff 4.6px 6.1px);"></div><div class="f" style="left:909.75px;top:916.74px;width:104.00px;height:24.3px;background:#b9e5f6;padding-left:8.25px;font-size:16.5px;letter-spacing:0.58px;">lw</div><div style="left:1015.00px;top:916.74px;width:1.75px;height:24.3px;background:#b9e5f6;"></div><div style="left:1023.00px;top:916.74px;width:12.00px;height:24.3px;background:#b9e5f6;"></div><div style="left:1036.75px;top:916.74px;width:24.25px;height:24.3px;background:#b9e5f6;"></div><div class="f" style="left:1062.50px;top:916.74px;width:73.50px;height:24.3px;background:#b9e5f6;padding-left:8.10px;font-size:16.5px;letter-spacing:0.58px;">Ft$6</div><div style="left:1137.60px;top:916.74px;width:2.80px;height:24.3px;background:#b9e5f6;"></div><div style="left:1141.25px;top:916.74px;width:9.25px;height:24.3px;background:#b9e5f6;"></div><div style="left:1151.75px;top:916.74px;width:2.50px;height:24.3px;background:#d6effa;"></div><div style="left:1160.50px;top:916.74px;width:12.00px;height:24.3px;background:#b9e5f6;"></div><div style="left:1504.50px;top:916.74px;width:9.75px;height:24.3px;background:#b9e5f6;"></div><div style="left:425.00px;top:942.68px;width:2.20px;height:24.3px;background:#b9e5f6;"></div><div style="left:427.70px;top:942.68px;width:1.60px;height:24.3px;background:#b9e5f6;"></div><div style="left:429.80px;top:942.68px;width:1.70px;height:24.3px;background:#b9e5f6;"></div><div style="left:432.30px;top:942.68px;width:1.40px;height:24.3px;background:#d6effa;"></div><div style="left:440.85px;top:942.68px;width:3.05px;height:24.3px;background:#b9e5f6;"></div><div style="left:446.00px;top:942.68px;width:0.80px;height:24.3px;background:#d6effa;"></div><div class="f" style="left:451.70px;top:942.68px;width:81.80px;height:24.3px;background:#b9e5f6;padding-left:8.80px;font-size:16.5px;letter-spacing:0.58px;">us$2</div><div style="left:535.00px;top:942.68px;width:13.00px;height:24.3px;background:#b9e5f6;"></div><div style="left:549.25px;top:942.68px;width:23.75px;height:24.3px;background:#b9e5f6;"></div><div style="left:576.00px;top:942.68px;width:3.50px;height:24.3px;background:#d6effa;"></div><div style="left:582.25px;top:942.68px;width:7.00px;height:24.3px;background:#b9e5f6;"></div><div class="f" style="left:590.50px;top:942.68px;width:80.50px;height:24.3px;background:#b9e5f6;padding-left:8.50px;font-size:16.5px;letter-spacing:0.58px;">use<span style="letter-spacing:-0.35px">...</span>ue</div><div style="left:725.00px;top:942.68px;width:17.00px;height:24.3px;background:repeating-linear-gradient(90deg,#dff2fb 0 1.2px,#fdfbff 1.2px 5.2px,#cfecf9 5.2px 6.6px,#fdfbff 6.6px 9.3px);"></div><div style="left:743.75px;top:942.68px;width:6.75px;height:24.3px;background:#b9e5f6;"></div><div class="f" style="left:752.00px;top:942.68px;width:44.00px;height:24.3px;background:#b9e5f6;padding-left:8.50px;font-size:16.5px;letter-spacing:0.58px;">$w</div><div class="f" style="left:797.25px;top:942.68px;width:87.00px;height:24.3px;background:#b9e5f6;padding-left:8.25px;font-size:16.5px;letter-spacing:0.58px;">hc$1</div><div style="left:893.00px;top:942.68px;width:15.50px;height:24.3px;background:repeating-linear-gradient(90deg,#d3edf9 0 1.6px,#fdfbff 1.6px 3.3px,#c6e9f7 3.3px 4.6px,#fdfbff 4.6px 6.1px);"></div><div class="f" style="left:909.75px;top:942.68px;width:104.00px;height:24.3px;background:#b9e5f6;padding-left:8.25px;font-size:16.5px;letter-spacing:0.58px;">qf</div><div style="left:1015.00px;top:942.68px;width:1.75px;height:24.3px;background:#b9e5f6;"></div><div style="left:1023.00px;top:942.68px;width:12.00px;height:24.3px;background:#b9e5f6;"></div><div style="left:1036.75px;top:942.68px;width:24.25px;height:24.3px;background:#b9e5f6;"></div><div class="f" style="left:1062.50px;top:942.68px;width:73.50px;height:24.3px;background:#b9e5f6;padding-left:8.10px;font-size:16.5px;letter-spacing:0.58px;">(an<span style="letter-spacing:-0.35px">...</span>s)</div><div style="left:1137.60px;top:942.68px;width:2.80px;height:24.3px;background:#b9e5f6;"></div><div style="left:1141.25px;top:942.68px;width:9.25px;height:24.3px;background:#b9e5f6;"></div><div style="left:1151.75px;top:942.68px;width:2.50px;height:24.3px;background:#d6effa;"></div><div style="left:1160.50px;top:942.68px;width:12.00px;height:24.3px;background:#b9e5f6;"></div><div style="left:1504.50px;top:942.68px;width:9.75px;height:24.3px;background:#b9e5f6;"></div><div class="f" style="left:1192.3px;top:937.2px;width:48.2px;height:21px;background:#808489;color:#fff;line-height:22.4px;padding-left:5.5px;font-size:16.5px;letter-spacing:0.4px;">DCL</div></div>
<div style="left:122.80px;top:286.50px;width:1.00px;height:147.00px;background:rgba(120,140,220,.22);"></div>
<div style="left:122.80px;top:445.30px;width:1.00px;height:512.70px;background:rgba(120,140,220,.22);"></div>
<div style="left:226.55px;top:286.50px;width:1.00px;height:147.00px;background:rgba(120,140,220,.22);"></div>
<div style="left:226.55px;top:445.30px;width:1.00px;height:512.70px;background:rgba(120,140,220,.22);"></div>
<div style="left:330.30px;top:286.50px;width:1.00px;height:147.00px;background:rgba(120,140,220,.22);"></div>
<div style="left:330.30px;top:445.30px;width:1.00px;height:512.70px;background:rgba(120,140,220,.22);"></div>
<div style="left:434.05px;top:286.50px;width:1.00px;height:147.00px;background:rgba(120,140,220,.22);"></div>
<div style="left:434.05px;top:445.30px;width:1.00px;height:512.70px;background:rgba(120,140,220,.22);"></div>
<div style="left:537.80px;top:286.50px;width:1.00px;height:147.00px;background:rgba(120,140,220,.22);"></div>
<div style="left:537.80px;top:445.30px;width:1.00px;height:512.70px;background:rgba(120,140,220,.22);"></div>
<div style="left:641.55px;top:286.50px;width:1.00px;height:147.00px;background:rgba(120,140,220,.22);"></div>
<div style="left:641.55px;top:445.30px;width:1.00px;height:512.70px;background:rgba(120,140,220,.22);"></div>
<div style="left:745.30px;top:286.50px;width:1.00px;height:147.00px;background:rgba(120,140,220,.22);"></div>
<div style="left:745.30px;top:445.30px;width:1.00px;height:512.70px;background:rgba(120,140,220,.22);"></div>
<div style="left:849.05px;top:286.50px;width:1.00px;height:147.00px;background:rgba(120,140,220,.22);"></div>
<div style="left:849.05px;top:445.30px;width:1.00px;height:512.70px;background:rgba(120,140,220,.22);"></div>
<div style="left:952.80px;top:286.50px;width:1.00px;height:147.00px;background:rgba(120,140,220,.22);"></div>
<div style="left:952.80px;top:445.30px;width:1.00px;height:512.70px;background:rgba(120,140,220,.22);"></div>
<div style="left:1056.55px;top:286.50px;width:1.00px;height:147.00px;background:rgba(120,140,220,.22);"></div>
<div style="left:1056.55px;top:445.30px;width:1.00px;height:512.70px;background:rgba(120,140,220,.22);"></div>
<div style="left:1160.30px;top:286.50px;width:1.00px;height:147.00px;background:rgba(120,140,220,.22);"></div>
<div style="left:1160.30px;top:445.30px;width:1.00px;height:512.70px;background:rgba(120,140,220,.22);"></div>
<div style="left:1264.05px;top:286.50px;width:1.00px;height:147.00px;background:rgba(120,140,220,.22);"></div>
<div style="left:1264.05px;top:445.30px;width:1.00px;height:512.70px;background:rgba(120,140,220,.22);"></div>
<div style="left:1367.80px;top:286.50px;width:1.00px;height:147.00px;background:rgba(120,140,220,.22);"></div>
<div style="left:1367.80px;top:445.30px;width:1.00px;height:512.70px;background:rgba(120,140,220,.22);"></div>
<div style="left:1471.55px;top:286.50px;width:1.00px;height:147.00px;background:rgba(120,140,220,.22);"></div>
<div style="left:1471.55px;top:445.30px;width:1.00px;height:512.70px;background:rgba(120,140,220,.22);"></div>
<div style="left:1191.80px;top:286.50px;width:1.00px;height:671.50px;background:#97979c;"></div>
<div style="left:68.00px;top:958.00px;width:1464.00px;height:43.00px;background:#e5e8f5;border-bottom:1.2px solid #d3dff8;"></div>
<div class="t" style="left:84.00px;top:966.30px;font-size:18.4px;color:#24589f;letter-spacing:0.539px;">Summary</div>
<div style="left:68.50px;top:997.60px;width:114.00px;height:3.40px;background:#24589f;border-radius:4px 4px 0 0;"></div>
<div class="t" style="left:198.00px;top:966.30px;font-size:18.4px;color:#2b2b2f;letter-spacing:1.124px;">Bottom-up</div>
<div class="t" style="left:324.50px;top:966.30px;font-size:18.4px;color:#2b2b2f;letter-spacing:0.498px;">Call tree</div>
<div class="t" style="left:430.00px;top:966.30px;font-size:18.4px;color:#2b2b2f;letter-spacing:0.476px;">Event log</div>
<div style="left:68.00px;top:1001.00px;width:1464.00px;height:142.00px;background:#fdfbff;"></div>
<div style="left:81.00px;top:1016.00px;width:17.50px;height:17.50px;background:#b9e5f6;"></div>
<div class="t" style="left:105.00px;top:1010.60px;font-size:18.4px;color:#1f1f1f;letter-spacing:0.766px;">h</div>
<div class="t" style="left:84.00px;top:1046.30px;font-size:18.4px;color:#7d7d82;letter-spacing:0.369px;">Duration</div>
<div class="t" style="left:173.00px;top:1046.30px;font-size:18.4px;color:#1f1f1f;letter-spacing:0.435px;">3.58 ms</div>
<div class="t" style="left:84.00px;top:1076.60px;font-size:18.4px;color:#7d7d82;letter-spacing:0.200px;">Source</div>
<div class="t" style="left:159.50px;top:1076.60px;font-size:18.4px;color:#8c8c91;letter-spacing:0.331px;">main-DI52MBTG.js:3:16621</div>
<div class="t" style="left:84.00px;top:1107.00px;font-size:18.4px;color:#7d7d82;letter-spacing:0.319px;">Origin</div>
<div class="t" style="left:151.00px;top:1107.00px;font-size:18.4px;color:#1f1f1f;letter-spacing:0.305px;">angular.dev</div>
<div style="left:1513.70px;top:1001.00px;width:18.30px;height:142.00px;background:#f9f8fa;border-left:1px solid #e6e5ea;"></div>
<div style="left:1518.60px;top:1005.00px;width:9.20px;height:21.50px;background:#c2c2c4;border-radius:5px;"></div>
</div></div></body></html>
